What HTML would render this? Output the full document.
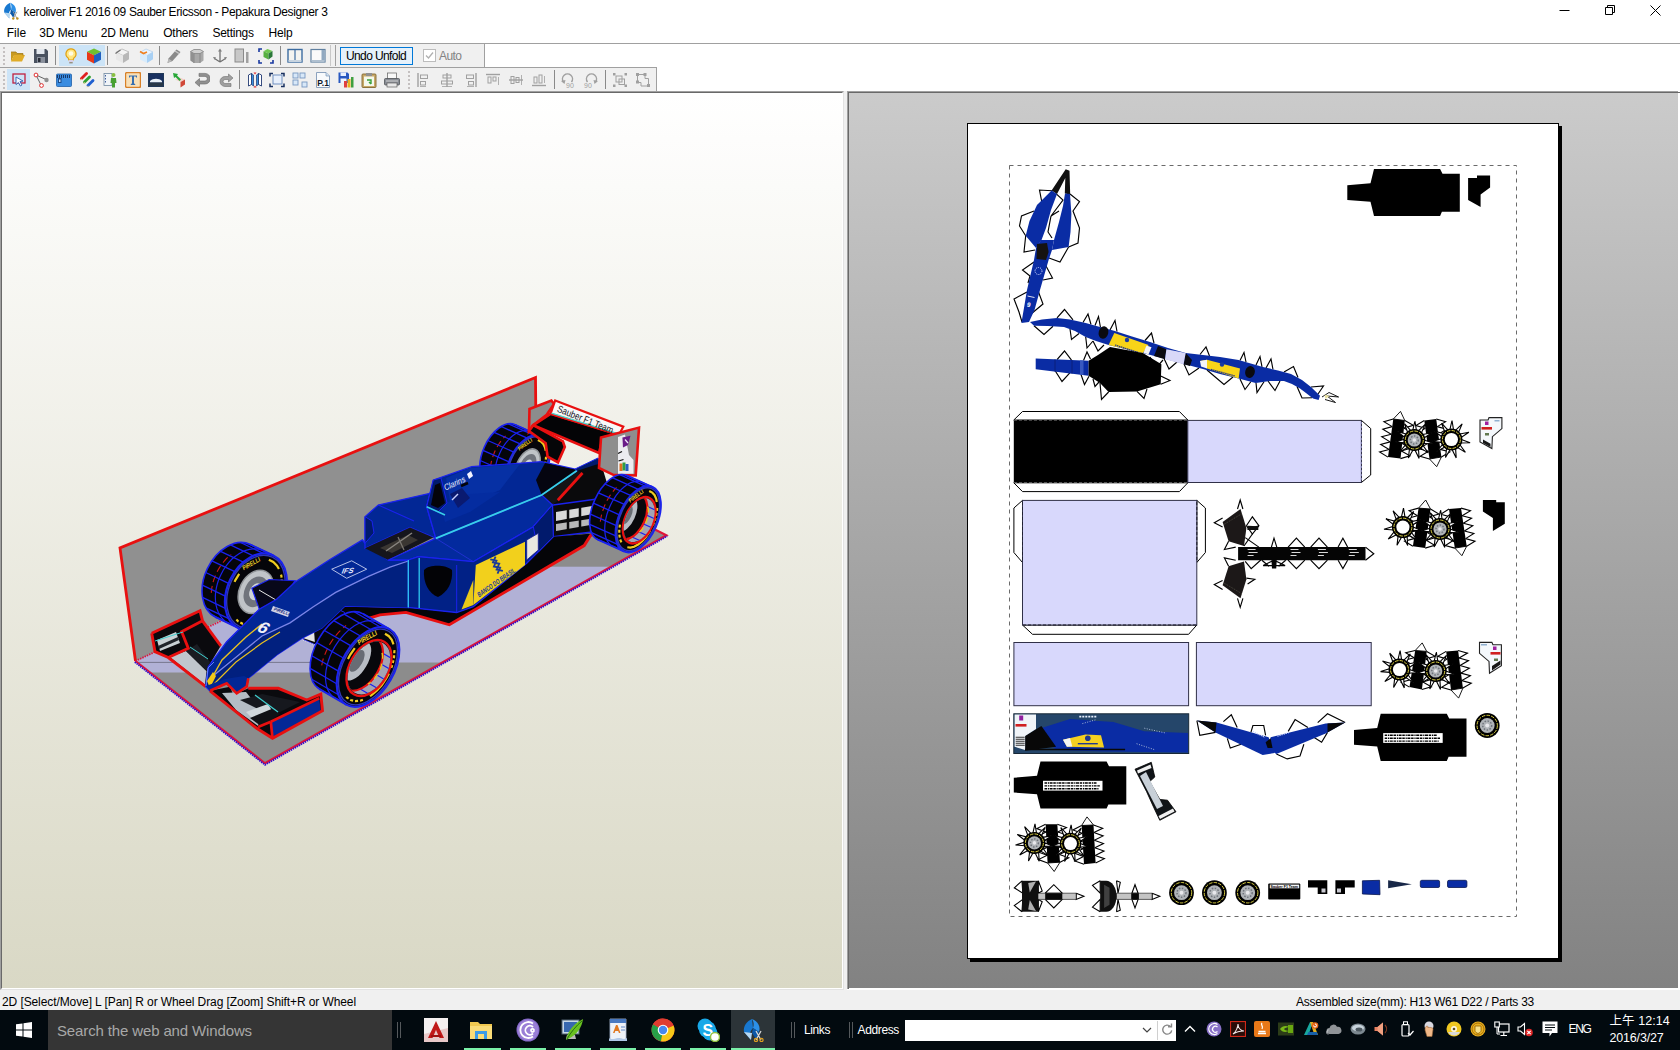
<!DOCTYPE html>
<html><head><meta charset="utf-8"><title>Pepakura Designer 3</title>
<style>
*{box-sizing:border-box;margin:0;padding:0}
html,body{width:1680px;height:1050px;overflow:hidden;background:#fff;font-family:"Liberation Sans","Noto Sans CJK TC",sans-serif;font-size:12px;color:#000}
.a{position:absolute}
.t{position:absolute;white-space:nowrap;line-height:1}
#title{left:23.5px;top:6px;font-size:12px}
.m{top:27px;font-size:12px}
#tb1{left:0;top:44px;width:485px;height:24px;background:#f0f0f0;border-right:1px solid #a0a0a0;border-bottom:1px solid #a0a0a0}
#tb2{left:0;top:68px;width:657px;height:23px;background:#f0f0f0;border-right:1px solid #a0a0a0}
.sel{background:#cce4f7;}
.sep{position:absolute;width:1px;background:#8a8a8a}
.grip{position:absolute;width:2px;background-image:linear-gradient(#c4c0c0 50%,transparent 50%);background-size:2px 4px}
#lp{left:0;top:91px;width:844px;height:899px;border:1px solid #a0a0a0;border-right-color:#e3e3e3;border-bottom-color:#e3e3e3;background:#fff}
#lpi{left:1px;top:92px;width:842px;height:897px;border:1px solid #696969;border-right-color:#fff;border-bottom-color:#fff;background:linear-gradient(#ffffff,#d9d8c5)}
#rp{left:847px;top:91px;width:831px;height:899px;background:linear-gradient(#cbcbcb,#828282);border-top:1px solid #a0a0a0;border-bottom:2px solid #fff}
#status{left:0;top:990px;width:1680px;height:20px;background:#f0f0f0}
#task{left:0;top:1010px;width:1680px;height:40px;background:#020a0f}
</style></head><body>
<div class="t" style="left:23.5px;top:6.0px;font-size:12px;color:#000;letter-spacing:-0.348px;">keroliver F1 2016 09 Sauber Ericsson - Pepakura Designer 3</div>
<svg class="a" style="left:1550px;top:0" width="130" height="22" viewBox="0 0 130 22"><g stroke="#000" stroke-width="1" fill="none"><path d="M9.5 10.500h10"/><path d="M55.500 7.500h7v7h-7z M57.500 7.500v-2h7v7h-2"/><path d="M100.500 5.500l10 10M110.500 5.500l-10 10"/></g></svg>
<div class="t" style="left:6.7px;top:26.6px;font-size:12px;color:#000;letter-spacing:0.041px;">File</div>
<div class="t" style="left:39.3px;top:26.6px;font-size:12px;color:#000;letter-spacing:-0.099px;">3D Menu</div>
<div class="t" style="left:100.7px;top:26.6px;font-size:12px;color:#000;letter-spacing:-0.099px;">2D Menu</div>
<div class="t" style="left:163.3px;top:26.6px;font-size:12px;color:#000;letter-spacing:-0.285px;">Others</div>
<div class="t" style="left:212.4px;top:26.6px;font-size:12px;color:#000;letter-spacing:-0.245px;">Settings</div>
<div class="t" style="left:268.6px;top:26.6px;font-size:12px;color:#000;letter-spacing:-0.220px;">Help</div>
<svg class="a" id="appicon" style="left:2px;top:2px" width="18" height="18" viewBox="0 0 24 24"><path d="M11 1c-5 2-9 7-8 13l7 8c-2-5-1-9 2-12z" fill="#1878d0"/><path d="M3 14l7 8 1-7z" fill="#b8d8f0"/><path d="M11 1c2 3 2 6 1 9l6 4c2-5-1-11-7-13z" fill="#2c90e8"/><path d="M12 10l6 4-3 7-4-6z" fill="#0c58a8"/><path d="M15 13l5 9M20 13l-5 9" stroke="#a0a0a0" stroke-width="1.300"/><circle cx="15" cy="22" r="1.600" fill="#c09020"/><circle cx="20.500" cy="22" r="1.600" fill="#c09020"/></svg><div class="a" style="left:0;top:43px;width:1680px;height:1px;background:#a0a0a0"></div>
<div class="a" id="tb1"></div>
<div class="a" id="tb2"></div>
<div class="a" id="tb2top" style="left:485px;top:67px;width:172px;height:1px;background:#a0a0a0"></div>
<div class="a sel" style="left:59px;top:45px;width:46px;height:21px"></div>
<div class="a sel" style="left:7px;top:69px;width:23px;height:21px"></div>
<div class="grip" style="left:3px;top:47px;height:18px"></div>
<div class="grip" style="left:3px;top:71px;height:18px"></div>
<div class="grip" style="left:408px;top:71px;height:18px"></div>
<div class="a" id="lp"></div><div class="a" id="lpi"></div>
<div class="a" style="left:844px;top:91px;width:3px;height:899px;background:#f0f0f0"></div>
<div class="a" id="rp"></div>
<div class="a" style="left:847px;top:92px;width:833px;height:1px;background:#696969"></div>
<div class="a" style="left:847px;top:91px;width:1px;height:898px;background:#a0a0a0"></div>
<div class="a" style="left:848px;top:92px;width:1px;height:897px;background:#696969"></div>
<div class="a" id="status"></div>
<div class="a" id="task"></div>
<svg class="a" style="left:9.5px;top:48px" width="16" height="16" viewBox="0 0 16 16"><path d="M1 4h5l1 1.500h6v2H4l-3 6z" fill="#c89a20"/><path d="M1 13.500l3-6.500h11l-3 6.500z" fill="#e0ac28"/><path d="M1 4h5l1 1.500h6v2" fill="none" stroke="#a07818" stroke-width=".8"/></svg>
<svg class="a" style="left:33px;top:48px" width="16" height="16" viewBox="0 0 16 16"><path d="M1 1h12l2 2v12H1z" fill="#4a5260"/><rect x="3.500" y="1" width="8" height="5" fill="#e4e8ee"/><rect x="4" y="9" width="8" height="6" fill="#8a909c"/><rect x="5" y="10" width="2.500" height="4" fill="#2a2e38"/></svg>
<svg class="a" style="left:63px;top:48px" width="16" height="16" viewBox="0 0 16 16"><path d="M8 .8a5 5 0 0 1 3 9c-.6.600-.8 1.400-.8 2.200H5.800c0-.8-.2-1.600-.8-2.200a5 5 0 0 1 3-9z" fill="#ffe680" stroke="#e0a010" stroke-width="1.200"/><circle cx="8" cy="5.500" r="2.300" fill="#fffbe0"/><rect x="5.800" y="12" width="4.400" height="2.200" fill="#d8d0e8"/><rect x="6.300" y="14.300" width="3.400" height="1" fill="#807050"/></svg>
<svg class="a" style="left:86px;top:48px" width="16" height="16" viewBox="0 0 16 16"><path d="M8 .5l7 3.200-7 3.500-7-3.500z" fill="#70c030"/><path d="M1 3.700l7 3.500v8.300l-7-3.700z" fill="#e83818"/><path d="M15 3.700l-7 3.500v8.300l7-3.700z" fill="#2060c0"/></svg>
<svg class="a" style="left:114px;top:48px" width="16" height="16" viewBox="0 0 16 16"><path d="M8 1l7 3-6 3.500-7-3.200z" fill="#f4f4f4" stroke="#a0a0a0" stroke-width=".6"/><path d="M2 4.300l7 3.200v7.500l-7-3.400z" fill="#e8e8e8"/><path d="M15 4l-6 3.500v7.500l6-3.700z" fill="#b8b8b8"/><path d="M1.500 5.500l5-3.500" stroke="#707070" stroke-width="1.200" fill="none"/></svg>
<svg class="a" style="left:138px;top:48px" width="16" height="16" viewBox="0 0 16 16"><path d="M8 1l7 3-6 3.500-7-3.200z" fill="#e8f4ff" stroke="#a8c8e8" stroke-width=".6"/><path d="M2 4.300l7 3.200v7.500l-7-3.400z" fill="#d8ecfc"/><path d="M15 4l-6 3.500v7.500l6-3.700z" fill="#a8d0f4"/><path d="M2 3.500l3.500 2 3.500-1.500" stroke="#f08020" stroke-width="1.600" fill="none"/></svg>
<svg class="a" style="left:166px;top:48px" width="16" height="16" viewBox="0 0 16 16"><path d="M10.500 1.500l4 2.500-8 9-5 2 1-4.500z" fill="#8a8a8a"/><path d="M9 3l4 2.500" stroke="#c8c8c8" stroke-width="1.400"/><path d="M2.500 10.500l-1 4.500 4.500-2z" fill="#b8b8b8"/></svg>
<svg class="a" style="left:189px;top:48px" width="16" height="16" viewBox="0 0 16 16"><path d="M1.500 3.500l3.500-2h6l3.500 2v9l-3.500 2.500h-6l-3.500-2.500z" fill="#a8a8a8"/><path d="M1.500 3.500l3.500-2h6l3.500 2-3.500 2h-6z" fill="#d0d0d0" stroke="#808080" stroke-width=".7"/><path d="M5 5.500v9.500M11 5.500v9.500" stroke="#808080" stroke-width=".8"/><path d="M1.500 3.500v9l3.500 2.500V5.500z" fill="#909090"/></svg>
<svg class="a" style="left:212px;top:48px" width="16" height="16" viewBox="0 0 16 16"><path d="M8 3v11M8 14L2.500 10.500M8 14l5.500-3.500" stroke="#707070" stroke-width="1.300" fill="none"/><path d="M8 .5l2 3H6z M1 9l3 .3-1.500 2.500z M15 9l-3 .3 1.500 2.500z" fill="#808080"/></svg>
<svg class="a" style="left:234px;top:48px" width="16" height="16" viewBox="0 0 16 16"><rect x="1" y="1" width="8.500" height="13" fill="#c8c8c8" stroke="#8a8a8a" stroke-width="1"/><rect x="12" y="4" width="2.500" height="11" fill="#a0a0a0"/></svg>
<svg class="a" style="left:258px;top:48px" width="16" height="16" viewBox="0 0 16 16"><path d="M1 4V1h3M1 12v3h3M15 12v3h-3" stroke="#1838a0" stroke-width="1.600" fill="none"/><path d="M9.500 1l5 2-4 2.500-5-2.200z" fill="#70c850"/><path d="M5.500 3.300l5 2.200v6l-5-2.600z" fill="#58b040"/><path d="M14.500 3l-4 2.500v6l4-2.900z" fill="#2a7838"/></svg>
<svg class="a" style="left:287px;top:48px" width="16" height="16" viewBox="0 0 16 16"><rect x="1" y="1.500" width="14" height="12.500" fill="#f4f4f0" stroke="#3c6ca0" stroke-width="1.400"/><path d="M8 1.500v12.500" stroke="#3c6ca0" stroke-width="1.200"/><rect x="1.500" y="12" width="13" height="2" fill="#c8d4e0"/></svg>
<svg class="a" style="left:310px;top:48px" width="16" height="16" viewBox="0 0 16 16"><rect x="1" y="1.500" width="14" height="12.500" fill="#fafafa" stroke="#6080a0" stroke-width="1.200"/><rect x="11.500" y="2" width="3" height="11.500" fill="#90a8c0"/><rect x="1.500" y="12" width="13" height="2" fill="#b0c0d0"/></svg>
<svg class="a" style="left:10.5px;top:71.5px" width="16" height="16" viewBox="0 0 16 16"><rect x="2" y="2" width="12" height="9" fill="none" stroke="#c02040" stroke-width="1.300"/><path d="M5 5l7 4-3 .6 2 3.400-1.600 1-2-3.400-2.400 2z" fill="#f4f8ff" stroke="#3060b0" stroke-width=".9"/></svg>
<svg class="a" style="left:33px;top:71.5px" width="16" height="16" viewBox="0 0 16 16"><path d="M3 3l5.500 11M3 3l10 4.500" stroke="#404040" stroke-width=".8"/><circle cx="3" cy="3" r="1.900" fill="#fff" stroke="#e03030" stroke-width="1"/><circle cx="8.500" cy="13.500" r="1.900" fill="#fff" stroke="#e03030" stroke-width="1"/><circle cx="13.500" cy="8" r="2.200" fill="#909090"/></svg>
<svg class="a" style="left:56px;top:71.5px" width="16" height="16" viewBox="0 0 16 16"><rect x=".5" y="2" width="15" height="12.500" rx="1" fill="#3a8ce0" stroke="#2060a8" stroke-width=".8"/><path d="M1 4.500h14" stroke="#183868" stroke-width="3" stroke-dasharray="1 1"/><rect x="2" y="6" width="3.500" height="5" fill="#1c4c8c"/><rect x="3" y="7.500" width="1.500" height="2.500" fill="#b8d8f8"/></svg>
<svg class="a" style="left:79px;top:71.5px" width="16" height="16" viewBox="0 0 16 16"><g stroke-width="2.800" stroke-linecap="round"><path d="M2.500 6.500l5-5" stroke="#e02020"/><path d="M5.500 10l5-5" stroke="#30a030"/><path d="M9 13.500l5-5" stroke="#2060d0"/></g><path d="M1 8.500l1.500-2 1 1z M4 12l1.500-2 1 1z M7.500 15.500l1.500-2 1 1z" fill="#e8c890"/></svg>
<svg class="a" style="left:103px;top:71.5px" width="16" height="16" viewBox="0 0 16 16"><rect x="1" y="1.500" width="8" height="12" fill="#f0f4f8" stroke="#7088a0" stroke-width=".8"/><path d="M2.500 3v9" stroke="#4060a0" stroke-width="1" stroke-dasharray="1.500 1.500"/><circle cx="10.500" cy="3" r="2" fill="#88c040"/><path d="M8 6h5l.5 5h-1.500v4.500h-3V11H7.500z" fill="#48a030"/></svg>
<svg class="a" style="left:125px;top:71.5px" width="16" height="16" viewBox="0 0 16 16"><rect x=".5" y=".5" width="15" height="15" rx="1.500" fill="#f8e0b8" stroke="#d88028" stroke-width="1.400"/><path d="M4 3.500h8v2h-.8l-.5-.9H9v7l1.200.5v.9H5.800v-.9L7 11.600v-7H5.300l-.5.900H4z" fill="#3870b0"/></svg>
<svg class="a" style="left:148px;top:71.5px" width="16" height="16" viewBox="0 0 16 16"><rect x=".5" y="1.500" width="15" height="13" fill="#183060" stroke="#203858" stroke-width="1"/><path d="M2 9c3-3 9-3 12 0l0 1.500H2z" fill="#e8f0f8"/><rect x="1" y="10.500" width="14" height="3.500" fill="#283848"/></svg>
<svg class="a" style="left:171px;top:71.5px" width="16" height="16" viewBox="0 0 16 16"><path d="M8.500 5.500l5.500 2-4.500 2.500-5.500-2.200z" fill="#f4d0c8"/><path d="M4 7.800l5.500 2.200v5.500l-5.500-2.600z" fill="#f0f0f0"/><path d="M14 7.500l-4.500 2.500v5.500l4.500-2.900z" fill="#d04838"/><path d="M2 1l5 1-1 1.500 4 4-1.500 1.500-4-4L3 6z" fill="#28a838"/></svg>
<svg class="a" style="left:194px;top:71.5px" width="16" height="16" viewBox="0 0 16 16"><path d="M1 10.500l4.500-4v2.500h5.500a2.300 2.300 0 0 0 0-4.600H5v-3h6a5.300 5.300 0 0 1 0 10.600H5.500v2.500z" fill="#909090" stroke="#686868" stroke-width=".6"/></svg>
<svg class="a" style="left:218px;top:71.5px" width="16" height="16" viewBox="0 0 16 16"><path d="M15 6l-4.500-4v2.500H7a5 5 0 0 0 0 10h6v-3H7a2 2 0 0 1 0-4h3.500v2.500z" fill="#a0a0a0" stroke="#707070" stroke-width=".6"/></svg>
<svg class="a" style="left:247px;top:71.5px" width="16" height="16" viewBox="0 0 16 16"><path d="M1.500 3l3-1.500v11l-3 1.500z M11.500 1.500l3 1.500v11l-3-1.500z" fill="#fff" stroke="#203870" stroke-width=".9"/><path d="M4.500 1.500l2 1.500v11l-2-1.500z M11.500 1.500l-2 1.500v11l2-1.500z" fill="#3a90e0" stroke="#203870" stroke-width=".7"/><path d="M6.500 .5h3l-1.500 2z M6.500 15.500h3l-1.500-2z" fill="#e03030"/></svg>
<svg class="a" style="left:269px;top:71.5px" width="16" height="16" viewBox="0 0 16 16"><path d="M1 4.500V1.500h3M1 11.500v3h3M15 11.500v3h-3M15 4.500V1.500h-3" stroke="#183060" stroke-width="1.500" fill="none"/><rect x="4" y="3" width="9" height="9" fill="#e8f0fc" stroke="#7090c0" stroke-width="1"/></svg>
<svg class="a" style="left:292px;top:71.5px" width="16" height="16" viewBox="0 0 16 16"><g fill="#d8e8f8" stroke="#7898c0" stroke-width=".9"><rect x="1" y="1" width="5" height="5"/><rect x="8" y="1" width="5" height="5"/><rect x="1" y="8" width="5" height="5"/><rect x="10" y="10" width="5" height="5"/></g></svg>
<svg class="a" style="left:315px;top:71.5px" width="16" height="16" viewBox="0 0 16 16"><path d="M1.500 .5h9.500l3.500 3.500v11.500H1.500z" fill="#f8fafc" stroke="#8098b8" stroke-width=".9"/><path d="M11 .5v3.500h3.500" fill="#d0e0f0" stroke="#8098b8" stroke-width=".7"/><text x="2.300" y="14" font-family="Liberation Sans,sans-serif" font-weight="bold" font-size="8.500" fill="#101828">P.1</text></svg>
<svg class="a" style="left:338px;top:71.5px" width="16" height="16" viewBox="0 0 16 16"><path d="M.5 .5h9l1.500 1.500v9H.5z" fill="#2858c0"/><rect x="2.500" y=".5" width="5.500" height="3.500" fill="#e8f0ff"/><rect x="2.500" y="6.500" width="6" height="4.500" fill="#f0f4ff"/><rect x="6" y="9" width="3" height="6.500" fill="#e04040"/><rect x="9.500" y="7" width="3" height="8.500" fill="#e8b020"/><rect x="13" y="5" width="2.500" height="10.500" fill="#40a040"/></svg>
<svg class="a" style="left:361px;top:71.5px" width="16" height="16" viewBox="0 0 16 16"><rect x="1" y="2" width="14" height="13.500" rx="1" fill="#c8a868" stroke="#806830" stroke-width=".9"/><rect x="3" y="4.500" width="10" height="9.500" fill="#f4f8ec"/><rect x="5" y="1" width="6" height="3" fill="#909090"/><path d="M6 8h4v4M10 12l-2-2" stroke="#38a038" stroke-width="1.400" fill="none"/></svg>
<svg class="a" style="left:384px;top:71.5px" width="16" height="16" viewBox="0 0 16 16"><rect x="3.500" y="1" width="9" height="6" fill="#f8f8f8" stroke="#707070" stroke-width=".8"/><rect x=".5" y="6.500" width="15" height="6.500" rx="1" fill="#888c94" stroke="#505458" stroke-width=".8"/><rect x="3" y="11" width="10" height="4" fill="#e8e8e8" stroke="#606060" stroke-width=".7"/><path d="M2 9h12" stroke="#d0d0d0" stroke-width="1"/></svg>
<svg class="a" style="left:416px;top:71.5px" width="16" height="16" viewBox="0 0 16 16"><path d="M2 1v14" stroke="#a0a0a0" stroke-width="1.400"/><rect x="4.500" y="3" width="7" height="3.500" fill="none" stroke="#a0a0a0"/><rect x="4.500" y="9.500" width="5" height="3.500" fill="none" stroke="#a0a0a0"/><path d="M4 14.500h6" stroke="#a0a0a0" stroke-width=".8"/></svg>
<svg class="a" style="left:439px;top:71.5px" width="16" height="16" viewBox="0 0 16 16"><path d="M8 1v14" stroke="#a0a0a0" stroke-width="1.400"/><rect x="4" y="3" width="8" height="3" fill="none" stroke="#a0a0a0"/><rect x="2.500" y="9" width="11" height="3" fill="none" stroke="#a0a0a0"/><path d="M3 14.500h10" stroke="#a0a0a0" stroke-width=".8"/></svg>
<svg class="a" style="left:462px;top:71.5px" width="16" height="16" viewBox="0 0 16 16"><path d="M14 1v14" stroke="#a0a0a0" stroke-width="1.400"/><rect x="4.500" y="3" width="7" height="3.500" fill="none" stroke="#a0a0a0"/><rect x="6.500" y="9.500" width="5" height="3.500" fill="none" stroke="#a0a0a0"/><path d="M5 14.500h7" stroke="#a0a0a0" stroke-width=".8"/></svg>
<svg class="a" style="left:485px;top:71.5px" width="16" height="16" viewBox="0 0 16 16"><path d="M1 2.500h14" stroke="#a0a0a0" stroke-width="1.400"/><rect x="3" y="5" width="3" height="6" fill="none" stroke="#a0a0a0"/><rect x="8" y="5" width="3" height="4" fill="none" stroke="#a0a0a0"/><path d="M13.500 5v8" stroke="#a0a0a0" stroke-width=".8"/></svg>
<svg class="a" style="left:508px;top:71.5px" width="16" height="16" viewBox="0 0 16 16"><path d="M1 8h14" stroke="#a0a0a0" stroke-width="1.400"/><rect x="3" y="4.500" width="3" height="7" fill="none" stroke="#a0a0a0"/><rect x="8" y="5.500" width="3" height="5" fill="none" stroke="#a0a0a0"/><path d="M13.500 3v10" stroke="#a0a0a0" stroke-width=".8"/></svg>
<svg class="a" style="left:531px;top:71.5px" width="16" height="16" viewBox="0 0 16 16"><path d="M1 13.500h14" stroke="#a0a0a0" stroke-width="1.400"/><rect x="3" y="5" width="3" height="6" fill="none" stroke="#a0a0a0"/><rect x="8" y="3" width="3" height="8" fill="none" stroke="#a0a0a0"/><path d="M13.500 4v7" stroke="#a0a0a0" stroke-width=".8"/></svg>
<svg class="a" style="left:560px;top:71.5px" width="16" height="16" viewBox="0 0 16 16"><path d="M3.500 10a5 5 0 1 1 8 0" fill="none" stroke="#a0a0a0" stroke-width="1.500"/><path d="M1 9l3.500 3 1-4z" fill="#a0a0a0"/><text x="6" y="15.500" font-family="Liberation Sans,sans-serif" font-size="7" fill="#a0a0a0">90</text></svg>
<svg class="a" style="left:583px;top:71.5px" width="16" height="16" viewBox="0 0 16 16"><path d="M4.500 10a5 5 0 1 1 8 0" fill="none" stroke="#a0a0a0" stroke-width="1.500"/><path d="M15 9l-3.500 3-1-4z" fill="#a0a0a0"/><text x="1" y="15.500" font-family="Liberation Sans,sans-serif" font-size="7" fill="#a0a0a0">90</text></svg>
<svg class="a" style="left:612px;top:71.5px" width="16" height="16" viewBox="0 0 16 16"><g fill="#a0a0a0"><rect x="1" y="1" width="2.500" height="2.500"/><rect x="12.500" y="1" width="2.500" height="2.500"/><rect x="1" y="12.500" width="2.500" height="2.500"/><rect x="12.500" y="12.500" width="2.500" height="2.500"/></g><rect x="4" y="4" width="6" height="6" fill="none" stroke="#a0a0a0"/><rect x="7" y="7" width="5.500" height="5.500" fill="none" stroke="#a0a0a0"/></svg>
<svg class="a" style="left:635px;top:71.5px" width="16" height="16" viewBox="0 0 16 16"><g fill="#a0a0a0"><rect x="1" y="1" width="3" height="3"/><rect x="8.500" y="1" width="3" height="3"/><rect x="1" y="8.500" width="3" height="3"/><rect x="12" y="12" width="3" height="3"/></g><path d="M2.500 2.500h7.500v4h3.500v7.500h-7.500v-3.500h-3.500z" fill="none" stroke="#a0a0a0"/></svg>
<div class="sep" style="left:55px;top:46px;height:19px"></div><div class="sep" style="left:107px;top:46px;height:19px"></div><div class="sep" style="left:159px;top:46px;height:19px"></div><div class="sep" style="left:280px;top:46px;height:19px"></div><div class="sep" style="left:330px;top:45px;height:21px;background:#c8c8c8"></div><div class="sep" style="left:335px;top:45px;height:21px;background:#a0a0a0"></div><div class="sep" style="left:239px;top:70px;height:19px"></div><div class="sep" style="left:554px;top:70px;height:19px"></div><div class="sep" style="left:605px;top:70px;height:19px"></div><div class="a" style="left:340px;top:47px;width:73px;height:18px;background:#e5f1fb;border:1px solid #0078d7"></div><div class="t" style="left:346.0px;top:50.2px;font-size:12px;color:#000;letter-spacing:-0.610px;">Undo Unfold</div>
<div class="a" style="left:423px;top:49px;width:13px;height:13px;background:#fff;border:1px solid #bcbcbc"></div><svg class="a" style="left:423px;top:49px" width="13" height="13"><path d="M3 6.500l2.500 2.500 4.500-5.500" fill="none" stroke="#b0b0b0" stroke-width="1.300"/></svg><div class="t" style="left:439.0px;top:50.2px;font-size:12px;color:#838383;letter-spacing:-0.546px;">Auto</div>
<div class="t" style="left:2.0px;top:996.0px;font-size:12px;color:#000;letter-spacing:-0.094px;">2D [Select/Move] L [Pan] R or Wheel Drag [Zoom] Shift+R or Wheel</div>
<div class="t" style="left:1296.0px;top:996.0px;font-size:12px;color:#000;letter-spacing:-0.256px;">Assembled size(mm): H13 W61 D22 / Parts 33</div>
<svg class="a" style="left:0;top:0" width="850" height="1000" viewBox="0 0 850 1000"><defs><clipPath id="flr"><polygon points="135.500,661 265,763.300 666.400,535.300 536.500,469"/></clipPath></defs><polygon points="135.5,661.0 265.0,763.3 666.4,535.3 536.5,469.0" fill="#8c8c8c"/><g clip-path="url(#flr)"><rect x="100" y="566.700" width="600" height="95.800" fill="#b1b1d6"/><rect x="100" y="662" width="240" height="10.500" fill="#b1b1d6"/><path d="M100 662.400h215" stroke="#68687c" stroke-width=".8"/></g><polyline points="135.5,661.0 265.0,763.3 666.4,535.3 640.0,522.0" fill="none" stroke="#e01438" stroke-width="2.2"/><polyline points="134.8,662.0 265.0,764.8 667.2,536.1" fill="none" stroke="#3010d0" stroke-width="1.8" stroke-dasharray="1.500 .8"/><polygon points="120.0,548.0 535.5,377.5 536.5,469.0 135.5,661.0" fill="#909090"/><polyline points="135.5,661.0 120.0,548.0 535.5,377.5 536.3,469.0" fill="none" stroke="#e81010" stroke-width="2.8"/><polyline points="135.5,661.0 222.0,620.5" fill="none" stroke="#d81840" stroke-width="1.8" stroke-dasharray="1.500 1"/><ellipse cx="501.7" cy="454.8" rx="19.0" ry="33.0" transform="rotate(24.0 501.7 454.8)" fill="#05050a" stroke="#1a22ee" stroke-width="1.6"/><polygon points="541.1,436.3 515.1,424.7 488.3,484.9 514.3,496.5" fill="#05050a"/><path d="M500.5 489.9L498.9 488.2L497.5 486.1L496.4 483.7L495.6 481.0L495.1 478.0L494.8 474.7L494.9 471.3L495.3 467.8L496.0 464.2L496.9 460.5L498.2 456.9L499.7 453.3L501.4 449.8L503.3 446.5L505.5 443.4L507.8 440.6L510.2 438.0L512.7 435.8L515.2 433.9L517.8 432.4L520.4 431.3L522.9 430.6L525.3 430.4L527.7 430.6" fill="none" stroke="#1a22ee" stroke-width="1.2"/><path d="M490.4 467.8L490.5 466.4L490.7 465.0L491.0 463.5L491.3 462.0L491.7 460.6L492.0 459.1L492.5 457.6L493.0 456.2L493.5 454.7L494.1 453.3L494.7 451.8L495.3 450.4L496.0 449.0L496.8 447.6L497.5 446.3L498.3 445.0L499.1 443.7L500.0 442.4L500.9 441.2L501.8 440.0L502.7 438.9L503.6 437.8L504.6 436.8L505.6 435.8" fill="none" stroke="#d01818" stroke-width="1.1" stroke-dasharray="7 4"/><path d="M512.0 495.2L486.0 483.6" stroke="#1a22ee" stroke-width="1.3"/><path d="M507.9 489.8L481.9 478.2" stroke="#1a22ee" stroke-width="1.3"/><path d="M505.9 481.8L479.9 470.2" stroke="#1a22ee" stroke-width="1.3"/><path d="M506.3 472.1L480.3 460.5" stroke="#1a22ee" stroke-width="1.3"/><path d="M509.0 461.9L483.0 450.3" stroke="#1a22ee" stroke-width="1.3"/><path d="M513.8 452.1L487.8 440.5" stroke="#1a22ee" stroke-width="1.3"/><path d="M520.1 443.9L494.1 432.3" stroke="#1a22ee" stroke-width="1.3"/><path d="M527.2 438.1L501.2 426.5" stroke="#1a22ee" stroke-width="1.3"/><path d="M534.4 435.4L508.4 423.8" stroke="#1a22ee" stroke-width="1.3"/><path d="M540.8 436.1L514.8 424.5" stroke="#1a22ee" stroke-width="1.3"/><path d="M541.1 436.3L515.1 424.7M514.3 496.5L488.3 484.9" stroke="#1a22ee" stroke-width="1.8"/><ellipse cx="527.7" cy="466.4" rx="19.0" ry="33.0" transform="rotate(24.0 527.7 466.4)" fill="#05050a" stroke="#1a22ee" stroke-width="2.2"/><ellipse cx="527.7" cy="466.4" rx="17.9" ry="31.3" transform="rotate(24.0 527.7 466.4)" fill="none" stroke="#3038b8" stroke-width="1.4"/><path d="M537.9 440.0L540.9 441.5L543.3 444.0L545.0 447.6L546.0 451.9L546.1 457.0L545.4 462.4L544.0 468.0L541.8 473.6L539.0 478.8L535.6 483.5L532.0 487.4L528.1 490.4L524.2 492.3L520.5 493.1L517.1 492.7L514.2 491.1L511.9 488.5L510.2 484.8L509.4 480.4L509.3 475.3L510.1 469.8L511.6 464.2L513.9 458.7L516.8 453.5" fill="none" stroke="#f0cc20" stroke-width="2.2" stroke-dasharray="14 6 3 2 3 2 3 2 3 6 30 8 3 2 3 2 3 2 3 40"/><text x="0" y="0" text-anchor="middle" font-family="Liberation Sans,sans-serif" font-weight="bold" font-style="italic" font-size="5.3" fill="#f4d428" transform="translate(526.1 445.9) rotate(-35.9) scale(.8 1)">PIRELLI</text><ellipse cx="527.7" cy="466.4" rx="11.0" ry="18.5" transform="rotate(24.0 527.7 466.4)" fill="#c0c4c8" stroke="#909498" stroke-width="1.5"/><ellipse cx="527.7" cy="466.4" rx="7.6" ry="13.2" transform="rotate(24.0 527.7 466.4)" fill="#70747c"/><ellipse cx="527.7" cy="466.4" rx="4.2" ry="7.3" transform="rotate(24.0 527.7 466.4)" fill="#d0d4d8"/><polygon points="529.5,409.0 551.4,400.5 554.0,404.0 546.7,414.8 533.3,425.2 529.0,431.0" fill="#8c8c8c" stroke="#e81010" stroke-width="2.6"/><polygon points="529.0,431.0 533.3,425.2 562.9,441.4 564.8,447.0 558.0,462.4 547.6,456.7 545.7,443.3" fill="#060608" stroke="#e81010" stroke-width="2.6"/><polygon points="533.3,425.2 550.5,413.8 619.0,434.8 602.9,437.5 599.0,452.9" fill="#040406" stroke="#e81010" stroke-width="2.6"/><polygon points="555.2,400.5 623.3,426.7 619.0,434.8 550.5,413.8" fill="#f8f8f8" stroke="#e81010" stroke-width="2.2"/><polyline points="551.5,413.2 618.5,433.8" fill="none" stroke="#50d8d0" stroke-width="1.4"/><text x="0" y="0" font-family="Liberation Sans,sans-serif" font-size="10" fill="#101018" transform="translate(556.500 411.500) rotate(22) scale(.81 1)">Sauber F1 Team</text><polygon points="575.0,469.0 598.0,458.0 601.0,463.0 578.0,475.0" fill="#011a6c" stroke="#1a22ee" stroke-width="1"/><polygon points="552.5,505.0 576.7,471.0 601.0,463.0 612.0,500.0 600.0,532.0 553.3,536.7" fill="#0a0a0c"/><polygon points="556.0,512.0 598.0,505.0 598.0,513.0 556.0,521.0" fill="#d8d8d8"/><polygon points="556.0,524.0 596.0,518.0 596.0,524.0 556.0,531.0" fill="#b8b8b8"/><path d="M568 508v22M580 506v22" stroke="#0a0a0c" stroke-width="2.500"/><polyline points="553.0,505.0 612.0,497.0" fill="none" stroke="#1a22ee" stroke-width="1.5"/><polyline points="553.3,536.7 600.0,531.0" fill="none" stroke="#1a22ee" stroke-width="1.5"/><polygon points="541.7,495.0 576.7,470.8 583.0,472.5 558.0,500.5 552.5,505.0" fill="#141416"/><polyline points="582.5,473.0 557.8,500.2" fill="none" stroke="#e81010" stroke-width="2.8"/><polygon points="601.0,437.6 639.0,427.6 635.7,475.5 613.3,474.8 599.0,468.0" fill="#8e8e8e" stroke="#e81010" stroke-width="2.6"/><polygon points="618.0,437.0 625.0,434.5 629.0,455.0 633.5,460.0 633.5,473.8 618.0,473.8" fill="#ececf0"/><polygon points="622.4,437.5 630.5,435.7 628.0,445.0 623.0,447.5" fill="#6a1c88"/><path d="M625 439.500l3 3.500" stroke="#f0e8f8" stroke-width="1.200"/><rect x="619.500" y="463.500" width="3" height="7.500" fill="#e07020"/><rect x="622.500" y="462.500" width="3" height="8" fill="#30a040"/><rect x="625.500" y="464" width="3" height="7" fill="#2860c0"/><path d="M618 453.500l4 -2M618.500 461l5 -1.500" stroke="#111" stroke-width="1.300"/><ellipse cx="233.0" cy="580.9" rx="28.4" ry="40.3" transform="rotate(25.5 233.0 580.9)" fill="#05050a" stroke="#1a22ee" stroke-width="1.6"/><polygon points="273.2,555.4 250.3,544.5 215.7,617.3 238.6,628.2" fill="#05050a"/><path d="M224.7 620.9L222.3 618.5L220.2 615.7L218.4 612.5L217.0 608.9L216.0 605.0L215.5 600.9L215.3 596.6L215.6 592.2L216.4 587.7L217.5 583.2L219.0 578.7L221.0 574.4L223.2 570.2L225.8 566.3L228.7 562.6L231.8 559.3L235.1 556.4L238.6 554.0L242.2 551.9L245.8 550.4L249.4 549.4L253.0 548.9L256.5 548.9L259.9 549.5" fill="none" stroke="#1a22ee" stroke-width="1.2"/><path d="M211.3 592.9L211.4 591.1L211.6 589.3L211.9 587.5L212.3 585.7L212.7 583.8L213.1 582.0L213.7 580.2L214.3 578.4L214.9 576.7L215.7 574.9L216.5 573.2L217.3 571.5L218.2 569.8L219.2 568.1L220.2 566.5L221.2 565.0L222.3 563.5L223.5 562.0L224.7 560.6L225.9 559.2L227.1 557.9L228.4 556.7L229.8 555.5L231.1 554.4" fill="none" stroke="#d01818" stroke-width="1.1" stroke-dasharray="7 4"/><path d="M235.2 626.1L212.3 615.2" stroke="#1a22ee" stroke-width="1.3"/><path d="M228.8 618.7L205.9 607.8" stroke="#1a22ee" stroke-width="1.3"/><path d="M225.4 608.3L202.5 597.4" stroke="#1a22ee" stroke-width="1.3"/><path d="M225.3 596.1L202.4 585.2" stroke="#1a22ee" stroke-width="1.3"/><path d="M228.6 583.4L205.7 572.5" stroke="#1a22ee" stroke-width="1.3"/><path d="M234.8 571.7L211.9 560.8" stroke="#1a22ee" stroke-width="1.3"/><path d="M243.4 562.2L220.5 551.3" stroke="#1a22ee" stroke-width="1.3"/><path d="M253.3 555.8L230.4 544.9" stroke="#1a22ee" stroke-width="1.3"/><path d="M263.4 553.4L240.5 542.5" stroke="#1a22ee" stroke-width="1.3"/><path d="M272.8 555.2L249.9 544.3" stroke="#1a22ee" stroke-width="1.3"/><path d="M273.2 555.4L250.3 544.5M238.6 628.2L215.7 617.3" stroke="#1a22ee" stroke-width="1.8"/><ellipse cx="255.9" cy="591.8" rx="28.4" ry="40.3" transform="rotate(25.5 255.9 591.8)" fill="#05050a" stroke="#1a22ee" stroke-width="2.2"/><ellipse cx="255.9" cy="591.8" rx="26.7" ry="38.3" transform="rotate(25.5 255.9 591.8)" fill="none" stroke="#3038b8" stroke-width="1.4"/><path d="M268.9 559.8L273.3 562.0L277.0 565.6L279.7 570.3L281.4 576.0L281.9 582.4L281.3 589.2L279.5 596.1L276.7 602.9L273.0 609.1L268.5 614.6L263.5 619.0L258.1 622.3L252.7 624.2L247.4 624.7L242.4 623.7L238.1 621.3L234.5 617.6L231.9 612.7L230.3 607.0L229.9 600.5L230.7 593.7L232.5 586.8L235.4 580.1L239.2 573.9" fill="none" stroke="#f0cc20" stroke-width="2.2" stroke-dasharray="14 6 3 2 3 2 3 2 3 6 30 8 3 2 3 2 3 2 3 40"/><text x="0" y="0" text-anchor="middle" font-family="Liberation Sans,sans-serif" font-weight="bold" font-style="italic" font-size="6.4" fill="#f4d428" transform="translate(252.2 565.6) rotate(-29.1) scale(.8 1)">PIRELLI</text><ellipse cx="255.9" cy="591.8" rx="16.5" ry="22.6" transform="rotate(25.5 255.9 591.8)" fill="#c0c4c8" stroke="#909498" stroke-width="1.5"/><ellipse cx="255.9" cy="591.8" rx="11.4" ry="16.1" transform="rotate(25.5 255.9 591.8)" fill="#70747c"/><ellipse cx="255.9" cy="591.8" rx="6.2" ry="8.9" transform="rotate(25.5 255.9 591.8)" fill="#d0d4d8"/><polygon points="251.9,588.2 269.2,579.5 295.2,580.7 285.0,596.0 259.3,609.2" fill="#08081a" stroke="#1a22ee" stroke-width="1.2"/><polyline points="259.0,590.0 276.0,600.0" fill="none" stroke="#e8e8e8" stroke-width="1"/><polygon points="151.7,633.3 200.0,610.8 202.5,620.8 220.8,645.8 208.3,666.7 205.8,686.7 168.3,657.5 155.0,651.7" fill="#0a0a0e"/><polygon points="169.8,657.1 186.0,651.0 206.5,671.0 205.0,684.8" fill="#c0c6cc"/><polygon points="186.0,651.0 197.0,644.0 210.0,662.0 206.5,671.0" fill="#1a1c22"/><polygon points="157.0,640.0 176.0,632.0 180.0,643.0 160.0,651.0" fill="#c8d0d4"/><polygon points="158.0,646.0 178.0,637.0 179.0,640.0 159.0,649.0" fill="#20242a"/><polyline points="151.7,633.3 200.0,610.8 202.5,620.8 181.7,631.7 188.3,648.3 168.3,657.5 155.0,651.7 151.7,633.3" fill="none" stroke="#e81010" stroke-width="2.9"/><polyline points="202.5,620.8 220.8,645.8" fill="none" stroke="#e81010" stroke-width="2.9"/><polyline points="168.3,657.5 205.8,686.7" fill="none" stroke="#e81010" stroke-width="2.9"/><polyline points="155.0,641.0 183.0,632.0" fill="none" stroke="#40d0d0" stroke-width="1"/><polyline points="190.0,647.0 208.0,659.0" fill="none" stroke="#40d0d0" stroke-width="1"/><polygon points="343.3,606.7 408.3,607.5 456.7,612.5 473.3,606.7 526.7,563.3 553.3,536.7 595.3,533.2 590.4,535.7 584.2,545.6 449.3,624.8 406.0,612.4 380.0,614.9 330.0,630.0" fill="#050508"/><polyline points="330.0,630.0 380.0,614.9 406.0,612.4 449.3,624.8 584.2,545.6 590.4,535.7 597.0,533.0" fill="none" stroke="#e81010" stroke-width="2.9"/><polygon points="302.4,625.9 330.8,606.1 344.5,612.3 344.5,618.5 314.8,644.5 303.6,639.5" fill="#08080c" stroke="#1a22ee" stroke-width="1"/><polygon points="303.0,627.0 313.5,622.0 314.8,642.0 303.6,638.3" fill="#e4e4e4"/><polygon points="313.5,619.0 321.0,614.0 322.0,620.0 314.5,626.0" fill="#d0d0d0"/><polygon points="324.0,612.5 331.0,608.0 332.0,612.0 325.0,617.0" fill="#c0c0c0"/><polyline points="303.0,640.0 315.0,645.0" fill="none" stroke="#e8e8e8" stroke-width="1" stroke-dasharray="1 1"/><polygon points="205.8,686.7 208.3,666.7 226.7,641.7 259.3,609.2 276.6,599.3 295.2,582.0 330.0,559.5 362.4,540.0 365.0,543.3 388.3,560.0 408.3,560.0 408.3,607.5 345.0,606.0 322.0,628.0 301.7,638.3 276.7,655.0 248.3,678.3 246.7,686.7 236.7,693.3 226.7,683.3 210.0,690.8" fill="#022795" stroke="#1a22ee" stroke-width="1.4"/><polygon points="207.0,684.0 225.0,664.0 262.0,636.0 290.0,622.9 313.0,607.0 335.7,592.4 369.0,576.2 390.0,567.1 408.3,561.0 408.3,607.5 345.0,606.0 322.0,628.0 301.7,638.3 276.7,655.0 248.3,678.3 246.7,686.7 236.7,693.3 226.7,683.3 210.0,690.8" fill="#01207f"/><polyline points="213.0,676.0 262.0,636.0 290.0,622.9 313.0,607.0 335.7,592.4 369.0,576.2 390.0,567.1 408.3,561.0" fill="none" stroke="#7c86e8" stroke-width="1.3"/><polyline points="209.0,683.0 222.0,660.0 246.0,637.0 262.0,624.0" fill="none" stroke="#e8c020" stroke-width="1.4"/><polyline points="212.0,686.0 236.0,662.0 262.0,643.0 280.0,632.0" fill="none" stroke="#e8c020" stroke-width="1.2"/><polygon points="207.0,681.0 213.0,672.0 216.0,676.0 210.0,688.0" fill="#f0c818"/><polyline points="206.0,686.0 208.0,668.0 214.0,662.0" fill="none" stroke="#6080ff" stroke-width="1"/><text x="0" y="0" font-family="Liberation Sans,sans-serif" font-weight="bold" font-size="17" fill="#f0f0f8" transform="translate(272 625) rotate(205) skewX(-15)">9</text><polygon points="273.0,606.0 290.0,612.0 288.0,617.0 271.0,611.0" fill="#d0d4e8"/><text x="0" y="0" font-family="Liberation Sans,sans-serif" font-weight="bold" font-style="italic" font-size="4.600" fill="#1a2a80" transform="translate(273.500 610.200) rotate(19.500) scale(.92 1)">PIRELLI</text><polygon points="331.7,569.2 351.7,560.8 366.7,569.2 346.7,578.3" fill="none" stroke="#c8d0f0" stroke-width="0.9"/><text x="0" y="0" font-family="Liberation Sans,sans-serif" font-weight="bold" font-size="7.500" fill="#e8ecff" transform="translate(341 573.500) rotate(-3) skewX(-25)">IFS</text><polygon points="365.0,543.3 365.0,516.7 378.3,505.0 430.0,493.3 426.7,506.7 435.8,538.3 410.0,527.5 365.0,548.3" fill="#022795" stroke="#1a22ee" stroke-width="1.3"/><polygon points="365.0,516.7 365.0,543.3 374.0,533.0 372.0,521.0" fill="#011a6c" stroke="#1a22ee" stroke-width="1"/><polyline points="378.3,505.0 414.0,521.0" fill="none" stroke="#1a22ee" stroke-width="1.1"/><polygon points="365.0,548.3 410.0,527.5 433.3,537.5 388.3,560.0" fill="#15151c"/><polygon points="380.0,548.0 408.0,535.0 418.0,540.0 392.0,553.0" fill="#3a3632"/><polyline points="386.0,551.0 412.0,533.0" fill="none" stroke="#8a8680" stroke-width="1.5"/><polyline points="398.0,537.0 404.0,550.0" fill="none" stroke="#7a7670" stroke-width="1.3"/><polygon points="435.8,538.3 541.7,495.0 552.5,505.0 533.3,526.7 473.3,561.7 418.3,556.7 408.3,560.0 388.3,560.0" fill="#032a9e" stroke="#1a22ee" stroke-width="1.3"/><polyline points="435.8,538.3 473.3,561.7" fill="none" stroke="#2030d0" stroke-width="1"/><polygon points="408.3,560.0 418.3,556.7 473.3,561.7 533.3,526.7 552.5,505.0 553.3,536.7 526.7,563.3 473.3,606.7 456.7,612.5 408.3,607.5" fill="#012186" stroke="#1a22ee" stroke-width="1.3"/><polygon points="533.3,526.7 552.5,505.0 553.3,536.7 538.3,552.0" fill="#011a6c" stroke="#1a22ee" stroke-width="1"/><path d="M424 570c6-6 22-5 28 0c1 12-4 22-14 27c-9-3-15-14-14-27z" fill="#030306"/><polygon points="475.8,565.0 525.0,541.7 525.0,565.0 473.3,605.0" fill="#f2d01c"/><polygon points="473.3,580.0 473.3,605.0 461.5,609.5" fill="#e8c818"/><polygon points="526.7,540.0 538.3,533.3 538.3,550.0 526.7,560.0" fill="#e8e8e0" stroke="#101890" stroke-width="0.8"/><polyline points="408.3,560.0 408.3,607.5" fill="none" stroke="#30c8f0" stroke-width="1.3"/><polyline points="419.2,558.0 419.2,608.0" fill="none" stroke="#30c8f0" stroke-width="1.3"/><polyline points="456.7,565.0 456.7,612.5" fill="none" stroke="#1a22ee" stroke-width="1"/><g transform="translate(497 566) rotate(-27)"><path d="M-3 -9l5 4-5 4 5 4-5 4M3 -9l-5 4 5 4-5 4 5 4" fill="none" stroke="#1a3a98" stroke-width="1.800"/></g><text x="0" y="0" font-family="Liberation Sans,sans-serif" font-weight="bold" font-size="7" fill="#1a3a98" transform="translate(479 597.500) rotate(-35) skewX(-10) scale(.68 1)">BANCO DO BRASIL</text><polygon points="433.3,480.0 471.7,466.7 541.7,461.7 575.0,469.2 576.7,470.8 541.7,495.0 435.8,538.3 426.7,506.7" fill="#022795" stroke="#1a22ee" stroke-width="1.3"/><polygon points="545.0,463.0 575.0,469.5 576.7,470.8 541.7,495.0 536.0,480.0" fill="#050510"/><polygon points="446.0,478.0 470.0,468.0 520.0,464.0 500.0,490.0 452.0,512.0" fill="#0630a4"/><polygon points="440.0,505.0 470.0,494.0 500.0,492.0 470.0,512.0 445.0,522.0" fill="#042ca0"/><polygon points="433.3,480.0 441.0,478.0 447.0,503.0 438.0,512.0 426.7,506.7" fill="#011a6c" stroke="#1a22ee" stroke-width="1"/><polygon points="435.0,485.0 440.0,483.0 445.0,503.0 438.0,508.0 431.0,505.0" fill="#04040a"/><polygon points="450.0,494.0 462.0,488.0 470.0,498.0 458.0,508.0" fill="#0a1a70"/><polyline points="452.0,500.0 458.0,494.0" fill="none" stroke="#c8d0ff" stroke-width="1.5"/><polyline points="461.0,486.0 468.0,483.0" fill="none" stroke="#050508" stroke-width="2.5"/><text x="0" y="0" font-family="Liberation Sans,sans-serif" font-style="italic" font-size="8.500" fill="#f4f6ff" transform="translate(445.500 490.500) rotate(-24) scale(.85 1)">Clarins</text><polygon points="467.0,474.0 471.0,471.0 473.0,476.0 469.0,479.0" fill="#f4f4ff"/><polyline points="426.7,506.7 445.0,515.0" fill="none" stroke="#38d0e8" stroke-width="1.6"/><polyline points="435.8,538.3 541.7,495.0 576.7,470.8" fill="none" stroke="#38d0e8" stroke-width="1.8"/><polygon points="210.0,690.8 230.0,686.7 233.3,695.0 248.3,688.3 278.3,688.3 306.7,700.0 320.8,694.2 322.5,710.8 272.5,738.3 256.7,728.3" fill="#0a0a0e"/><polygon points="222.0,693.0 246.0,692.0 262.0,712.0 258.0,726.0 236.0,710.0" fill="#b4bcc4"/><polygon points="240.0,700.0 262.0,694.0 300.0,702.0 272.0,716.0" fill="#16181e"/><polygon points="246.0,712.0 268.0,704.0 275.0,716.0 258.0,724.0" fill="#d0d8dc"/><polygon points="250.0,718.0 274.0,708.0 280.0,714.0 262.0,727.0" fill="#101216"/><polygon points="270.8,721.7 319.2,698.3 320.8,710.8 272.5,737.5" fill="#042896"/><polyline points="210.0,690.8 256.7,728.3 272.5,738.3 322.5,710.8 320.8,694.2 306.7,700.0 278.3,688.3 248.3,688.3" fill="none" stroke="#e81010" stroke-width="2.9"/><polyline points="270.8,721.7 319.2,698.3" fill="none" stroke="#e81010" stroke-width="2.7"/><polyline points="270.8,721.7 272.5,738.3" fill="none" stroke="#e81010" stroke-width="2.7"/><polyline points="258.0,727.0 270.8,721.7" fill="none" stroke="#e81010" stroke-width="2.6"/><polyline points="255.0,695.0 278.0,712.0" fill="none" stroke="#40d0d0" stroke-width="1.2"/><polygon points="210.0,690.8 226.7,683.3 236.7,693.3 246.7,686.7 248.3,678.3 244.0,676.0 225.0,679.0 206.0,686.0" fill="#022795"/><polyline points="210.0,690.8 226.7,683.3 236.7,693.3 246.7,686.7 248.3,678.3" fill="none" stroke="#e81010" stroke-width="2.6"/><ellipse cx="341.4" cy="651.6" rx="26.0" ry="43.5" transform="rotate(30.0 341.4 651.6)" fill="#05050a" stroke="#1a22ee" stroke-width="1.6"/><polygon points="389.8,629.3 363.1,613.9 319.6,689.3 346.2,704.7" fill="#05050a"/><path d="M331.5 695.4L329.5 692.9L327.9 689.9L326.7 686.5L325.9 682.8L325.5 678.8L325.6 674.5L326.1 670.0L327.1 665.4L328.4 660.7L330.1 656.0L332.2 651.4L334.7 646.9L337.5 642.6L340.5 638.5L343.7 634.8L347.2 631.4L350.7 628.4L354.4 625.8L358.1 623.8L361.7 622.2L365.3 621.2L368.8 620.7L372.1 620.8L375.2 621.4" fill="none" stroke="#1a22ee" stroke-width="1.2"/><path d="M321.7 665.3L322.1 663.5L322.5 661.6L323.0 659.7L323.6 657.8L324.3 656.0L325.0 654.1L325.8 652.2L326.6 650.4L327.5 648.5L328.4 646.7L329.4 644.9L330.5 643.1L331.6 641.4L332.7 639.7L333.9 638.0L335.1 636.4L336.4 634.9L337.7 633.3L339.0 631.9L340.4 630.5L341.8 629.1L343.2 627.9L344.6 626.6L346.1 625.5" fill="none" stroke="#d01818" stroke-width="1.1" stroke-dasharray="7 4"/><path d="M343.3 702.5L316.7 687.1" stroke="#1a22ee" stroke-width="1.3"/><path d="M338.4 694.7L311.8 679.3" stroke="#1a22ee" stroke-width="1.3"/><path d="M336.7 683.8L310.1 668.4" stroke="#1a22ee" stroke-width="1.3"/><path d="M338.4 671.1L311.8 655.7" stroke="#1a22ee" stroke-width="1.3"/><path d="M343.3 658.0L316.7 642.6" stroke="#1a22ee" stroke-width="1.3"/><path d="M351.0 645.9L324.4 630.5" stroke="#1a22ee" stroke-width="1.3"/><path d="M360.4 636.0L333.8 620.6" stroke="#1a22ee" stroke-width="1.3"/><path d="M370.7 629.5L344.1 614.1" stroke="#1a22ee" stroke-width="1.3"/><path d="M380.7 627.2L354.1 611.8" stroke="#1a22ee" stroke-width="1.3"/><path d="M389.4 629.1L362.8 613.7" stroke="#1a22ee" stroke-width="1.3"/><path d="M389.8 629.3L363.1 613.9M346.2 704.7L319.6 689.3" stroke="#1a22ee" stroke-width="1.8"/><ellipse cx="368.0" cy="667.0" rx="26.0" ry="43.5" transform="rotate(30.0 368.0 667.0)" fill="#05050a" stroke="#1a22ee" stroke-width="2.2"/><ellipse cx="368.0" cy="667.0" rx="24.4" ry="41.3" transform="rotate(30.0 368.0 667.0)" fill="none" stroke="#3038b8" stroke-width="1.4"/><path d="M385.0 633.8L388.9 636.2L391.8 639.9L393.7 644.9L394.4 650.8L394.0 657.5L392.4 664.6L389.8 671.8L386.1 678.7L381.7 685.2L376.7 690.8L371.2 695.4L365.7 698.8L360.2 700.7L355.1 701.1L350.6 700.0L346.8 697.5L344.0 693.6L342.2 688.5L341.6 682.5L342.1 675.8L343.8 668.7L346.6 661.5L350.3 654.6L354.8 648.2" fill="none" stroke="#f0cc20" stroke-width="2.2" stroke-dasharray="14 6 3 2 3 2 3 2 3 6 30 8 3 2 3 2 3 2 3 40"/><text x="0" y="0" text-anchor="middle" font-family="Liberation Sans,sans-serif" font-weight="bold" font-style="italic" font-size="7.0" fill="#f4d428" transform="translate(368.3 639.7) rotate(-28.9) scale(.8 1)">PIRELLI</text><ellipse cx="369.0" cy="668.0" rx="19.2" ry="30.4" transform="rotate(30.0 369.0 668.0)" fill="#0a0a10" stroke="#e81010" stroke-width="2.4"/><clipPath id="wc1"><ellipse cx="369.0" cy="668.0" rx="18.2" ry="28.7" transform="rotate(30.0 369.0 668.0)" fill="#000"/></clipPath><g clip-path="url(#wc1)"><ellipse cx="369.0" cy="668.0" rx="19.2" ry="30.4" transform="rotate(30.0 369.0 668.0)" fill="#a4a4b4"/><path d="M391.6 658.4l-13.3 -7.7" stroke="#1a22ee" stroke-width="1.2"/><path d="M389.6 669.0l-13.3 -7.7" stroke="#1a22ee" stroke-width="1.2"/><path d="M384.6 679.4l-13.3 -7.7" stroke="#1a22ee" stroke-width="1.2"/><path d="M377.3 688.2l-13.3 -7.7" stroke="#1a22ee" stroke-width="1.2"/><path d="M368.8 694.0l-13.3 -7.7" stroke="#1a22ee" stroke-width="1.2"/><ellipse cx="361.0" cy="663.4" rx="18.7" ry="29.6" transform="rotate(30.0 361.0 663.4)" fill="#08080c" stroke="#e81010" stroke-width="2.2"/><ellipse cx="356.8" cy="660.9" rx="10.9" ry="21.8" transform="rotate(30.0 356.8 660.9)" fill="#b8bcc4"/><ellipse cx="356.8" cy="660.9" rx="5.7" ry="12.2" transform="rotate(30.0 356.8 660.9)" fill="#686c74"/><path d="M382.0 652.9L382.3 654.0L382.5 655.3L382.6 656.6L382.6 657.9L382.6 659.3L382.4 660.8L382.2 662.2L381.9 663.7L381.5 665.2L381.0 666.7L380.5 668.2L379.8 669.7L379.1 671.2L378.4 672.6L377.5 674.1L376.7 675.4L375.7 676.8L374.7 678.1L373.7 679.3L372.6 680.4L371.5 681.5L370.4 682.5L369.2 683.4L368.0 684.2" fill="none" stroke="#e8c820" stroke-width="1.4" stroke-dasharray="6 5"/></g><ellipse cx="612.2" cy="507.6" rx="19.1" ry="35.2" transform="rotate(24.0 612.2 507.6)" fill="#05050a" stroke="#1a22ee" stroke-width="1.6"/><polygon points="652.5,487.0 626.5,475.4 597.9,539.8 623.9,551.4" fill="#05050a"/><path d="M610.2 544.6L608.5 542.9L607.2 540.7L606.1 538.2L605.3 535.3L604.9 532.2L604.7 528.8L604.9 525.2L605.3 521.4L606.1 517.6L607.1 513.7L608.5 509.8L610.1 506.0L611.9 502.3L614.0 498.8L616.2 495.4L618.6 492.4L621.1 489.6L623.7 487.2L626.3 485.2L629.0 483.5L631.6 482.3L634.2 481.6L636.7 481.3L639.0 481.4" fill="none" stroke="#1a22ee" stroke-width="1.2"/><path d="M600.3 521.6L600.5 520.1L600.8 518.6L601.1 517.0L601.4 515.5L601.8 513.9L602.2 512.3L602.7 510.8L603.3 509.2L603.8 507.7L604.4 506.1L605.1 504.6L605.8 503.1L606.5 501.6L607.3 500.1L608.1 498.7L608.9 497.3L609.8 495.9L610.7 494.5L611.6 493.2L612.5 492.0L613.5 490.8L614.5 489.6L615.5 488.5L616.5 487.4" fill="none" stroke="#d01818" stroke-width="1.1" stroke-dasharray="7 4"/><path d="M621.6 550.0L595.6 538.4" stroke="#1a22ee" stroke-width="1.3"/><path d="M617.5 544.3L591.5 532.7" stroke="#1a22ee" stroke-width="1.3"/><path d="M615.7 535.9L589.7 524.3" stroke="#1a22ee" stroke-width="1.3"/><path d="M616.3 525.7L590.3 514.1" stroke="#1a22ee" stroke-width="1.3"/><path d="M619.4 514.8L593.4 503.2" stroke="#1a22ee" stroke-width="1.3"/><path d="M624.4 504.4L598.4 492.8" stroke="#1a22ee" stroke-width="1.3"/><path d="M631.0 495.6L605.0 484.0" stroke="#1a22ee" stroke-width="1.3"/><path d="M638.3 489.3L612.3 477.7" stroke="#1a22ee" stroke-width="1.3"/><path d="M645.7 486.3L619.7 474.7" stroke="#1a22ee" stroke-width="1.3"/><path d="M652.2 486.9L626.2 475.3" stroke="#1a22ee" stroke-width="1.3"/><path d="M652.5 487.0L626.5 475.4M623.9 551.4L597.9 539.8" stroke="#1a22ee" stroke-width="1.8"/><ellipse cx="638.2" cy="519.2" rx="19.1" ry="35.2" transform="rotate(24.0 638.2 519.2)" fill="#05050a" stroke="#1a22ee" stroke-width="2.2"/><ellipse cx="638.2" cy="519.2" rx="18.0" ry="33.4" transform="rotate(24.0 638.2 519.2)" fill="none" stroke="#3038b8" stroke-width="1.4"/><path d="M649.2 491.1L652.2 492.6L654.6 495.2L656.2 498.9L657.1 503.5L657.1 508.8L656.3 514.6L654.7 520.5L652.3 526.4L649.3 532.0L645.9 537.1L642.1 541.3L638.1 544.5L634.1 546.7L630.3 547.6L626.9 547.2L623.9 545.6L621.6 542.9L620.0 539.1L619.3 534.4L619.3 529.0L620.2 523.2L621.9 517.2L624.4 511.4L627.4 505.8" fill="none" stroke="#f0cc20" stroke-width="2.2" stroke-dasharray="14 6 3 2 3 2 3 2 3 6 30 8 3 2 3 2 3 2 3 40"/><text x="0" y="0" text-anchor="middle" font-family="Liberation Sans,sans-serif" font-weight="bold" font-style="italic" font-size="5.6" fill="#f4d428" transform="translate(637.1 497.6) rotate(-37.3) scale(.8 1)">PIRELLI</text><ellipse cx="639.2" cy="520.2" rx="14.1" ry="24.6" transform="rotate(24.0 639.2 520.2)" fill="#0a0a10" stroke="#e81010" stroke-width="2.4"/><clipPath id="wc2"><ellipse cx="639.2" cy="520.2" rx="13.4" ry="23.2" transform="rotate(24.0 639.2 520.2)" fill="#000"/></clipPath><g clip-path="url(#wc2)"><ellipse cx="639.2" cy="520.2" rx="14.1" ry="24.6" transform="rotate(24.0 639.2 520.2)" fill="#a4a4b4"/><path d="M655.5 510.1l-13.0 -5.8" stroke="#1a22ee" stroke-width="1.2"/><path d="M654.6 518.7l-13.0 -5.8" stroke="#1a22ee" stroke-width="1.2"/><path d="M651.4 527.5l-13.0 -5.8" stroke="#1a22ee" stroke-width="1.2"/><path d="M646.4 535.2l-13.0 -5.8" stroke="#1a22ee" stroke-width="1.2"/><path d="M640.4 540.8l-13.0 -5.8" stroke="#1a22ee" stroke-width="1.2"/><ellipse cx="631.4" cy="516.7" rx="13.8" ry="23.9" transform="rotate(24.0 631.4 516.7)" fill="#08080c" stroke="#e81010" stroke-width="2.2"/><ellipse cx="627.2" cy="514.9" rx="8.0" ry="17.6" transform="rotate(24.0 627.2 514.9)" fill="#b8bcc4"/><ellipse cx="627.2" cy="514.9" rx="4.2" ry="9.9" transform="rotate(24.0 627.2 514.9)" fill="#686c74"/><path d="M647.6 506.6L647.9 507.5L648.1 508.4L648.2 509.4L648.3 510.5L648.3 511.6L648.3 512.8L648.2 513.9L648.0 515.1L647.8 516.4L647.6 517.6L647.2 518.9L646.8 520.1L646.4 521.4L645.9 522.6L645.3 523.8L644.7 525.0L644.1 526.2L643.4 527.3L642.7 528.3L642.0 529.4L641.2 530.3L640.4 531.3L639.6 532.1L638.8 532.9" fill="none" stroke="#e8c820" stroke-width="1.4" stroke-dasharray="6 5"/></g></svg>
<svg class="a" style="left:0;top:0" width="1680" height="1050" viewBox="0 0 1680 1050"><rect x="970" y="126" width="592" height="836" fill="#000"/><rect x="967.500" y="123.500" width="591" height="835" fill="#fff" stroke="#000" stroke-width="1"/><rect x="1009.500" y="165.500" width="507" height="751" fill="none" stroke="#6a6a6a" stroke-width="1" stroke-dasharray="4 4"/><polygon points="1013.8,420.0 1022.5,411.5 1179.4,411.5 1187.8,420.0" fill="#fff" stroke="#000" stroke-width="1"/><polygon points="1013.8,482.8 1022.5,491.6 1179.4,491.6 1187.8,482.8" fill="#fff" stroke="#000" stroke-width="1"/><rect x="1013.800" y="420" width="174" height="62.800" fill="#000"/><path d="M1014 420.300h174M1014 482.500h174" stroke="#888" stroke-width=".6" stroke-dasharray="3 2"/><polygon points="1361.4,420.4 1370.7,428.5 1370.7,475.0 1361.4,482.5" fill="#fff" stroke="#000" stroke-width="1"/><rect x="1187.800" y="420.400" width="173.600" height="62.100" fill="#d8d8fc" stroke="#303048" stroke-width="1"/><path d="M1361.400 422v60" stroke="#8080b0" stroke-width="1" stroke-dasharray="2 2"/><polygon points="1022.5,500.4 1013.9,508.0 1013.9,552.5 1022.5,562.5" fill="#fff" stroke="#000" stroke-width="1"/><polygon points="1196.8,500.4 1205.4,508.0 1205.4,552.5 1196.8,562.5" fill="#fff" stroke="#000" stroke-width="1"/><polygon points="1022.5,625.0 1032.5,634.3 1188.6,634.3 1196.8,625.0" fill="#fff" stroke="#000" stroke-width="1"/><rect x="1022.500" y="500.400" width="174.300" height="124.600" fill="#d8d8fc" stroke="#303048" stroke-width="1"/><path d="M1022.500 502v60M1196.800 502v60M1023 625h174" stroke="#202030" stroke-width="1" stroke-dasharray="3 2"/><rect x="1013.900" y="642.500" width="174.700" height="63.200" fill="#d8d8fc" stroke="#303048" stroke-width="1"/><rect x="1196.400" y="642.500" width="174.800" height="63.200" fill="#d8d8fc" stroke="#303048" stroke-width="1"/><polygon points="1347.3,185.2 1370.5,183.2 1374.0,168.9 1440.1,168.9 1442.5,173.7 1459.8,173.7 1459.8,211.8 1441.9,211.8 1440.1,216.0 1374.0,216.0 1370.5,201.7 1347.3,199.9" fill="#000"/><polygon points="1468.1,177.9 1477.0,177.9 1477.0,175.5 1490.1,175.5 1490.1,187.4 1480.6,194.5 1480.6,207.0 1468.1,199.9" fill="#000"/><polygon points="1354.0,730.1 1377.2,728.1 1380.7,713.8 1446.8,713.8 1449.2,718.6 1466.5,718.6 1466.5,756.7 1448.6,756.7 1446.8,760.9 1380.7,760.9 1377.2,746.6 1354.0,744.8" fill="#000"/><rect x="1383.2" y="733.1" width="59.500" height="9.800" fill="#fff"/><path d="M1384.7 735.3h52.0" stroke="#000" stroke-width="1.400" stroke-dasharray="2.500 .8 1.200 .6 3 .7"/><path d="M1384.7 738.2h56.0" stroke="#000" stroke-width="1.400" stroke-dasharray="2.500 .8 1.200 .6 3 .7"/><path d="M1384.7 741.1h54.0" stroke="#000" stroke-width="1.400" stroke-dasharray="2.500 .8 1.200 .6 3 .7"/><polygon points="1013.8,777.8 1037.0,775.8 1040.5,761.5 1106.6,761.5 1109.0,766.3 1126.3,766.3 1126.3,804.4 1108.4,804.4 1106.6,808.6 1040.5,808.6 1037.0,794.3 1013.8,792.5" fill="#000"/><rect x="1043.0" y="780.8" width="59.500" height="9.800" fill="#fff"/><path d="M1044.5 783.0h52.0" stroke="#000" stroke-width="1.400" stroke-dasharray="2.500 .8 1.200 .6 3 .7"/><path d="M1044.5 785.9h56.0" stroke="#000" stroke-width="1.400" stroke-dasharray="2.500 .8 1.200 .6 3 .7"/><path d="M1044.5 788.8h54.0" stroke="#000" stroke-width="1.400" stroke-dasharray="2.500 .8 1.200 .6 3 .7"/><polygon points="1482.9,500.0 1496.2,500.0 1496.2,502.2 1504.8,502.2 1504.8,523.8 1492.9,531.0 1492.9,518.1 1482.9,511.4" fill="#000"/><polyline points="1388.0,457.1 1379.6,452.0 1389.1,449.5" fill="none" stroke="#000" stroke-width="1.1"/><polyline points="1389.1,449.5 1380.7,444.4 1390.1,441.9" fill="none" stroke="#000" stroke-width="1.1"/><polyline points="1390.1,441.9 1381.7,436.8 1391.2,434.2" fill="none" stroke="#000" stroke-width="1.1"/><polyline points="1391.2,434.2 1382.8,429.2 1392.2,426.6" fill="none" stroke="#000" stroke-width="1.1"/><polyline points="1392.2,426.6 1383.9,421.6 1393.3,419.0" fill="none" stroke="#000" stroke-width="1.1"/><polyline points="1404.8,420.5 1413.3,425.3 1403.9,428.1" fill="none" stroke="#000" stroke-width="1.1"/><polyline points="1403.9,428.1 1412.5,432.9 1403.1,435.7" fill="none" stroke="#000" stroke-width="1.1"/><polyline points="1403.1,435.7 1411.6,440.6 1402.2,443.4" fill="none" stroke="#000" stroke-width="1.1"/><polyline points="1402.2,443.4 1410.7,448.2 1401.4,451.0" fill="none" stroke="#000" stroke-width="1.1"/><polyline points="1401.4,451.0 1409.9,455.8 1400.5,458.6" fill="none" stroke="#000" stroke-width="1.1"/><polygon points="1393.3,419.0 1400.5,411.4 1404.8,420.5" fill="#fff" stroke="#000" stroke-width="0.9"/><polygon points="1393.3,419.0 1404.8,420.5 1400.5,458.6 1388.0,457.1" fill="#000"/><polyline points="1429.5,459.0 1420.1,456.4 1428.5,451.3" fill="none" stroke="#000" stroke-width="1.1"/><polyline points="1428.5,451.3 1419.0,448.7 1427.4,443.6" fill="none" stroke="#000" stroke-width="1.1"/><polyline points="1427.4,443.6 1418.0,441.0 1426.4,435.9" fill="none" stroke="#000" stroke-width="1.1"/><polyline points="1426.4,435.9 1416.9,433.3 1425.3,428.2" fill="none" stroke="#000" stroke-width="1.1"/><polyline points="1425.3,428.2 1415.9,425.6 1424.3,420.5" fill="none" stroke="#000" stroke-width="1.1"/><polyline points="1436.2,419.0 1445.6,421.6 1437.2,426.6" fill="none" stroke="#000" stroke-width="1.1"/><polyline points="1437.2,426.6 1446.7,429.2 1438.3,434.2" fill="none" stroke="#000" stroke-width="1.1"/><polyline points="1438.3,434.2 1447.7,436.8 1439.3,441.8" fill="none" stroke="#000" stroke-width="1.1"/><polyline points="1439.3,441.8 1448.8,444.4 1440.4,449.4" fill="none" stroke="#000" stroke-width="1.1"/><polyline points="1440.4,449.4 1449.8,452.0 1441.4,457.0" fill="none" stroke="#000" stroke-width="1.1"/><polygon points="1429.5,459.0 1436.7,466.7 1441.4,457.0" fill="#fff" stroke="#000" stroke-width="0.9"/><polygon points="1424.3,420.5 1436.2,419.0 1441.4,457.0 1429.5,459.0" fill="#000"/><polygon points="1424.3,439.9 1433.0,443.3 1423.7,443.5" fill="#fff" stroke="#000" stroke-width="1.1"/><polygon points="1422.8,445.3 1428.3,452.9 1420.3,448.0" fill="#fff" stroke="#000" stroke-width="1.1"/><polygon points="1418.5,449.1 1419.1,458.4 1415.0,450.0" fill="#fff" stroke="#000" stroke-width="1.1"/><polygon points="1413.0,449.9 1408.4,458.1 1409.5,448.8" fill="#fff" stroke="#000" stroke-width="1.1"/><polygon points="1407.8,447.6 1399.6,452.0 1405.5,444.8" fill="#fff" stroke="#000" stroke-width="1.1"/><polygon points="1404.7,442.9 1395.4,442.1 1404.3,439.3" fill="#fff" stroke="#000" stroke-width="1.1"/><polygon points="1404.7,437.3 1397.3,431.6 1406.3,434.0" fill="#fff" stroke="#000" stroke-width="1.1"/><polygon points="1407.7,432.5 1404.5,423.7 1410.8,430.6" fill="#fff" stroke="#000" stroke-width="1.1"/><polygon points="1412.8,430.1 1414.9,421.0 1416.4,430.2" fill="#fff" stroke="#000" stroke-width="1.1"/><polygon points="1418.4,430.9 1425.1,424.4 1421.4,432.9" fill="#fff" stroke="#000" stroke-width="1.1"/><polygon points="1422.7,434.5 1431.8,432.7 1424.1,437.9" fill="#fff" stroke="#000" stroke-width="1.1"/><circle cx="1414.3" cy="440.0" r="11.0" fill="#000"/><circle cx="1414.3" cy="440.0" r="9.0" fill="none" stroke="#f0e448" stroke-width="0.9" stroke-dasharray="3.5 1.2"/><circle cx="1414.3" cy="440.0" r="6.6" fill="#b0b4b8"/><circle cx="1414.3" cy="440.0" r="4.0" fill="none" stroke="#70747c" stroke-width="1.5" stroke-dasharray="1.5 1.5"/><circle cx="1414.3" cy="440.0" r="1.8" fill="#e8e8ec"/><polygon points="1461.4,439.4 1470.1,442.8 1460.8,443.0" fill="#fff" stroke="#000" stroke-width="1.1"/><polygon points="1459.9,444.8 1465.4,452.4 1457.4,447.5" fill="#fff" stroke="#000" stroke-width="1.1"/><polygon points="1455.6,448.6 1456.2,457.9 1452.1,449.5" fill="#fff" stroke="#000" stroke-width="1.1"/><polygon points="1450.1,449.4 1445.5,457.6 1446.6,448.3" fill="#fff" stroke="#000" stroke-width="1.1"/><polygon points="1444.9,447.1 1436.7,451.5 1442.6,444.3" fill="#fff" stroke="#000" stroke-width="1.1"/><polygon points="1441.8,442.4 1432.5,441.6 1441.4,438.8" fill="#fff" stroke="#000" stroke-width="1.1"/><polygon points="1441.8,436.8 1434.4,431.1 1443.4,433.5" fill="#fff" stroke="#000" stroke-width="1.1"/><polygon points="1444.8,432.0 1441.6,423.2 1447.9,430.1" fill="#fff" stroke="#000" stroke-width="1.1"/><polygon points="1449.9,429.6 1452.0,420.5 1453.5,429.7" fill="#fff" stroke="#000" stroke-width="1.1"/><polygon points="1455.5,430.4 1462.2,423.9 1458.5,432.4" fill="#fff" stroke="#000" stroke-width="1.1"/><polygon points="1459.8,434.0 1468.9,432.2 1461.2,437.4" fill="#fff" stroke="#000" stroke-width="1.1"/><circle cx="1451.4" cy="439.5" r="11.0" fill="#000"/><circle cx="1451.4" cy="439.5" r="9.0" fill="none" stroke="#f0e448" stroke-width="0.9" stroke-dasharray="3.5 1.2"/><circle cx="1451.4" cy="439.5" r="6.6" fill="#fff"/><polygon points="1480.0,420.0 1488.1,420.0 1489.0,417.6 1501.9,417.6 1501.9,428.6 1492.4,436.7 1491.9,448.6 1480.0,441.9" fill="#f4f8fc" stroke="#222" stroke-width="1.1"/><rect x="1485.0" y="421.5" width="3.500" height="3.500" fill="#a020a0"/><rect x="1481.5" y="427.0" width="10.500" height="2.600" fill="#d02020"/><rect x="1494.5" y="420.0" width="5" height="1.500" fill="#90b0d0"/><rect x="1485.0" y="433.0" width="4" height="2.500" fill="#607850"/><polygon points="1483.0,439.5 1490.5,443.8 1490.5,447.0 1483.0,443.0" fill="#181818"/><polyline points="1412.9,546.2 1404.6,541.1 1414.0,538.6" fill="none" stroke="#000" stroke-width="1.1"/><polyline points="1414.0,538.6 1405.7,533.4 1415.2,531.0" fill="none" stroke="#000" stroke-width="1.1"/><polyline points="1415.2,531.0 1406.8,525.8 1416.3,523.3" fill="none" stroke="#000" stroke-width="1.1"/><polyline points="1416.3,523.3 1408.0,518.2 1417.5,515.7" fill="none" stroke="#000" stroke-width="1.1"/><polyline points="1417.5,515.7 1409.1,510.6 1418.6,508.1" fill="none" stroke="#000" stroke-width="1.1"/><polyline points="1430.5,509.0 1438.9,514.1 1429.4,516.8" fill="none" stroke="#000" stroke-width="1.1"/><polyline points="1429.4,516.8 1437.8,521.9 1428.4,524.6" fill="none" stroke="#000" stroke-width="1.1"/><polyline points="1428.4,524.6 1436.8,529.8 1427.3,532.5" fill="none" stroke="#000" stroke-width="1.1"/><polyline points="1427.3,532.5 1435.7,537.6 1426.3,540.3" fill="none" stroke="#000" stroke-width="1.1"/><polyline points="1426.3,540.3 1434.6,545.4 1425.2,548.1" fill="none" stroke="#000" stroke-width="1.1"/><polygon points="1418.6,508.1 1425.7,500.0 1430.5,509.0" fill="#fff" stroke="#000" stroke-width="0.9"/><polygon points="1418.6,508.1 1430.5,509.0 1425.2,548.1 1412.9,546.2" fill="#000"/><polyline points="1454.8,548.1 1445.3,545.5 1453.6,540.3" fill="none" stroke="#000" stroke-width="1.1"/><polyline points="1453.6,540.3 1444.2,537.7 1452.5,532.5" fill="none" stroke="#000" stroke-width="1.1"/><polyline points="1452.5,532.5 1443.0,529.9 1451.3,524.6" fill="none" stroke="#000" stroke-width="1.1"/><polyline points="1451.3,524.6 1441.8,522.1 1450.2,516.8" fill="none" stroke="#000" stroke-width="1.1"/><polyline points="1450.2,516.8 1440.7,514.2 1449.0,509.0" fill="none" stroke="#000" stroke-width="1.1"/><polyline points="1461.0,508.1 1470.5,510.6 1462.1,515.7" fill="none" stroke="#000" stroke-width="1.1"/><polyline points="1462.1,515.7 1471.6,518.2 1463.3,523.3" fill="none" stroke="#000" stroke-width="1.1"/><polyline points="1463.3,523.3 1472.8,525.8 1464.4,531.0" fill="none" stroke="#000" stroke-width="1.1"/><polyline points="1464.4,531.0 1473.9,533.4 1465.6,538.6" fill="none" stroke="#000" stroke-width="1.1"/><polyline points="1465.6,538.6 1475.0,541.1 1466.7,546.2" fill="none" stroke="#000" stroke-width="1.1"/><polygon points="1454.8,548.1 1461.9,555.7 1466.7,546.2" fill="#fff" stroke="#000" stroke-width="0.9"/><polygon points="1449.0,509.0 1461.0,508.1 1466.7,546.2 1454.8,548.1" fill="#000"/><polygon points="1412.9,527.0 1421.6,530.4 1412.3,530.6" fill="#fff" stroke="#000" stroke-width="1.1"/><polygon points="1411.4,532.4 1416.9,540.0 1408.9,535.1" fill="#fff" stroke="#000" stroke-width="1.1"/><polygon points="1407.1,536.2 1407.7,545.5 1403.6,537.1" fill="#fff" stroke="#000" stroke-width="1.1"/><polygon points="1401.6,537.0 1397.0,545.2 1398.1,535.9" fill="#fff" stroke="#000" stroke-width="1.1"/><polygon points="1396.4,534.7 1388.2,539.1 1394.1,531.9" fill="#fff" stroke="#000" stroke-width="1.1"/><polygon points="1393.3,530.0 1384.0,529.2 1392.9,526.4" fill="#fff" stroke="#000" stroke-width="1.1"/><polygon points="1393.3,524.4 1385.9,518.7 1394.9,521.1" fill="#fff" stroke="#000" stroke-width="1.1"/><polygon points="1396.3,519.6 1393.1,510.8 1399.4,517.7" fill="#fff" stroke="#000" stroke-width="1.1"/><polygon points="1401.4,517.2 1403.5,508.1 1405.0,517.3" fill="#fff" stroke="#000" stroke-width="1.1"/><polygon points="1407.0,518.0 1413.7,511.5 1410.0,520.0" fill="#fff" stroke="#000" stroke-width="1.1"/><polygon points="1411.3,521.6 1420.4,519.8 1412.7,525.0" fill="#fff" stroke="#000" stroke-width="1.1"/><circle cx="1402.9" cy="527.1" r="11.0" fill="#000"/><circle cx="1402.9" cy="527.1" r="9.0" fill="none" stroke="#f0e448" stroke-width="0.9" stroke-dasharray="3.5 1.2"/><circle cx="1402.9" cy="527.1" r="6.6" fill="#fff"/><polygon points="1450.0,528.9 1458.7,532.3 1449.4,532.5" fill="#fff" stroke="#000" stroke-width="1.1"/><polygon points="1448.5,534.3 1454.0,541.9 1446.0,537.0" fill="#fff" stroke="#000" stroke-width="1.1"/><polygon points="1444.2,538.1 1444.8,547.4 1440.7,539.0" fill="#fff" stroke="#000" stroke-width="1.1"/><polygon points="1438.7,538.9 1434.1,547.1 1435.2,537.8" fill="#fff" stroke="#000" stroke-width="1.1"/><polygon points="1433.5,536.6 1425.3,541.0 1431.2,533.8" fill="#fff" stroke="#000" stroke-width="1.1"/><polygon points="1430.4,531.9 1421.1,531.1 1430.0,528.3" fill="#fff" stroke="#000" stroke-width="1.1"/><polygon points="1430.4,526.3 1423.0,520.6 1432.0,523.0" fill="#fff" stroke="#000" stroke-width="1.1"/><polygon points="1433.4,521.5 1430.2,512.7 1436.5,519.6" fill="#fff" stroke="#000" stroke-width="1.1"/><polygon points="1438.5,519.1 1440.6,510.0 1442.1,519.2" fill="#fff" stroke="#000" stroke-width="1.1"/><polygon points="1444.1,519.9 1450.8,513.4 1447.1,521.9" fill="#fff" stroke="#000" stroke-width="1.1"/><polygon points="1448.4,523.5 1457.5,521.7 1449.8,526.9" fill="#fff" stroke="#000" stroke-width="1.1"/><circle cx="1440.0" cy="529.0" r="11.0" fill="#000"/><circle cx="1440.0" cy="529.0" r="9.0" fill="none" stroke="#f0e448" stroke-width="0.9" stroke-dasharray="3.5 1.2"/><circle cx="1440.0" cy="529.0" r="6.6" fill="#b0b4b8"/><circle cx="1440.0" cy="529.0" r="4.0" fill="none" stroke="#70747c" stroke-width="1.5" stroke-dasharray="1.5 1.5"/><circle cx="1440.0" cy="529.0" r="1.8" fill="#e8e8ec"/><polyline points="1409.5,687.1 1401.2,682.1 1410.6,679.8" fill="none" stroke="#000" stroke-width="1.1"/><polyline points="1410.6,679.8 1402.3,674.7 1411.8,672.5" fill="none" stroke="#000" stroke-width="1.1"/><polyline points="1411.8,672.5 1403.5,667.4 1412.9,665.1" fill="none" stroke="#000" stroke-width="1.1"/><polyline points="1412.9,665.1 1404.6,660.1 1414.1,657.8" fill="none" stroke="#000" stroke-width="1.1"/><polyline points="1414.1,657.8 1405.7,652.8 1415.2,650.5" fill="none" stroke="#000" stroke-width="1.1"/><polyline points="1426.7,651.4 1435.1,656.3 1425.7,659.0" fill="none" stroke="#000" stroke-width="1.1"/><polyline points="1425.7,659.0 1434.2,664.0 1424.8,666.6" fill="none" stroke="#000" stroke-width="1.1"/><polyline points="1424.8,666.6 1433.2,671.6 1423.8,674.3" fill="none" stroke="#000" stroke-width="1.1"/><polyline points="1423.8,674.3 1432.3,679.2 1422.9,681.9" fill="none" stroke="#000" stroke-width="1.1"/><polyline points="1422.9,681.9 1431.3,686.8 1421.9,689.5" fill="none" stroke="#000" stroke-width="1.1"/><polygon points="1415.2,650.5 1422.2,642.9 1426.7,651.4" fill="#fff" stroke="#000" stroke-width="0.9"/><polygon points="1415.2,650.5 1426.7,651.4 1421.9,689.5 1409.5,687.1" fill="#000"/><polyline points="1451.0,690.0 1441.6,687.3 1450.0,682.3" fill="none" stroke="#000" stroke-width="1.1"/><polyline points="1450.0,682.3 1440.6,679.5 1449.1,674.6" fill="none" stroke="#000" stroke-width="1.1"/><polyline points="1449.1,674.6 1439.7,671.8 1448.1,666.8" fill="none" stroke="#000" stroke-width="1.1"/><polyline points="1448.1,666.8 1438.7,664.1 1447.2,659.1" fill="none" stroke="#000" stroke-width="1.1"/><polyline points="1447.2,659.1 1437.7,656.4 1446.2,651.4" fill="none" stroke="#000" stroke-width="1.1"/><polyline points="1458.1,650.5 1467.5,653.1 1459.1,658.0" fill="none" stroke="#000" stroke-width="1.1"/><polyline points="1459.1,658.0 1468.5,660.6 1460.0,665.5" fill="none" stroke="#000" stroke-width="1.1"/><polyline points="1460.0,665.5 1469.4,668.2 1461.0,673.1" fill="none" stroke="#000" stroke-width="1.1"/><polyline points="1461.0,673.1 1470.4,675.7 1461.9,680.6" fill="none" stroke="#000" stroke-width="1.1"/><polyline points="1461.9,680.6 1471.3,683.2 1462.9,688.1" fill="none" stroke="#000" stroke-width="1.1"/><polygon points="1451.0,690.0 1458.6,698.1 1462.9,688.1" fill="#fff" stroke="#000" stroke-width="0.9"/><polygon points="1446.2,651.4 1458.1,650.5 1462.9,688.1 1451.0,690.0" fill="#000"/><polygon points="1409.5,669.4 1418.2,672.8 1408.9,673.0" fill="#fff" stroke="#000" stroke-width="1.1"/><polygon points="1408.0,674.8 1413.5,682.4 1405.5,677.5" fill="#fff" stroke="#000" stroke-width="1.1"/><polygon points="1403.7,678.6 1404.3,687.9 1400.2,679.5" fill="#fff" stroke="#000" stroke-width="1.1"/><polygon points="1398.2,679.4 1393.6,687.6 1394.7,678.3" fill="#fff" stroke="#000" stroke-width="1.1"/><polygon points="1393.0,677.1 1384.8,681.5 1390.7,674.3" fill="#fff" stroke="#000" stroke-width="1.1"/><polygon points="1389.9,672.4 1380.6,671.6 1389.5,668.8" fill="#fff" stroke="#000" stroke-width="1.1"/><polygon points="1389.9,666.8 1382.5,661.1 1391.5,663.5" fill="#fff" stroke="#000" stroke-width="1.1"/><polygon points="1392.9,662.0 1389.7,653.2 1396.0,660.1" fill="#fff" stroke="#000" stroke-width="1.1"/><polygon points="1398.0,659.6 1400.1,650.5 1401.6,659.7" fill="#fff" stroke="#000" stroke-width="1.1"/><polygon points="1403.6,660.4 1410.3,653.9 1406.6,662.4" fill="#fff" stroke="#000" stroke-width="1.1"/><polygon points="1407.9,664.0 1417.0,662.2 1409.3,667.4" fill="#fff" stroke="#000" stroke-width="1.1"/><circle cx="1399.5" cy="669.5" r="11.0" fill="#000"/><circle cx="1399.5" cy="669.5" r="9.0" fill="none" stroke="#f0e448" stroke-width="0.9" stroke-dasharray="3.5 1.2"/><circle cx="1399.5" cy="669.5" r="6.6" fill="#fff"/><polygon points="1445.7,670.9 1454.4,674.3 1445.1,674.5" fill="#fff" stroke="#000" stroke-width="1.1"/><polygon points="1444.2,676.3 1449.7,683.9 1441.7,679.0" fill="#fff" stroke="#000" stroke-width="1.1"/><polygon points="1439.9,680.1 1440.5,689.4 1436.4,681.0" fill="#fff" stroke="#000" stroke-width="1.1"/><polygon points="1434.4,680.9 1429.8,689.1 1430.9,679.8" fill="#fff" stroke="#000" stroke-width="1.1"/><polygon points="1429.2,678.6 1421.0,683.0 1426.9,675.8" fill="#fff" stroke="#000" stroke-width="1.1"/><polygon points="1426.1,673.9 1416.8,673.1 1425.7,670.3" fill="#fff" stroke="#000" stroke-width="1.1"/><polygon points="1426.1,668.3 1418.7,662.6 1427.7,665.0" fill="#fff" stroke="#000" stroke-width="1.1"/><polygon points="1429.1,663.5 1425.9,654.7 1432.2,661.6" fill="#fff" stroke="#000" stroke-width="1.1"/><polygon points="1434.2,661.1 1436.3,652.0 1437.8,661.2" fill="#fff" stroke="#000" stroke-width="1.1"/><polygon points="1439.8,661.9 1446.5,655.4 1442.8,663.9" fill="#fff" stroke="#000" stroke-width="1.1"/><polygon points="1444.1,665.5 1453.2,663.7 1445.5,668.9" fill="#fff" stroke="#000" stroke-width="1.1"/><circle cx="1435.7" cy="671.0" r="11.0" fill="#000"/><circle cx="1435.7" cy="671.0" r="9.0" fill="none" stroke="#f0e448" stroke-width="0.9" stroke-dasharray="3.5 1.2"/><circle cx="1435.7" cy="671.0" r="6.6" fill="#b0b4b8"/><circle cx="1435.7" cy="671.0" r="4.0" fill="none" stroke="#70747c" stroke-width="1.5" stroke-dasharray="1.5 1.5"/><circle cx="1435.7" cy="671.0" r="1.8" fill="#e8e8ec"/><polygon points="1479.5,642.4 1491.9,642.4 1492.9,644.8 1501.4,644.8 1501.4,665.7 1489.5,673.3 1489.0,661.4 1479.5,653.3" fill="#f4f8fc" stroke="#222" stroke-width="1.1"/><rect x="1493" y="646.500" width="3.500" height="3.500" fill="#a020a0"/><rect x="1490.500" y="652" width="10" height="2.600" fill="#d02020"/><rect x="1481" y="644" width="6" height="1.500" fill="#90b0d0"/><rect x="1494" y="658.500" width="4" height="2.500" fill="#607850"/><polygon points="1492.0,666.0 1500.5,660.5 1500.5,664.5 1492.0,670.5" fill="#181818"/><polyline points="1047.6,863.0 1038.4,859.6 1047.2,855.3" fill="none" stroke="#000" stroke-width="1.1"/><polyline points="1047.2,855.3 1038.0,851.9 1046.8,847.5" fill="none" stroke="#000" stroke-width="1.1"/><polyline points="1046.8,847.5 1037.6,844.1 1046.4,839.8" fill="none" stroke="#000" stroke-width="1.1"/><polyline points="1046.4,839.8 1037.2,836.4 1046.0,832.0" fill="none" stroke="#000" stroke-width="1.1"/><polyline points="1046.0,832.0 1036.8,828.6 1045.6,824.3" fill="none" stroke="#000" stroke-width="1.1"/><polyline points="1057.3,824.3 1066.5,827.5 1057.8,831.9" fill="none" stroke="#000" stroke-width="1.1"/><polyline points="1057.8,831.9 1067.1,835.0 1058.4,839.5" fill="none" stroke="#000" stroke-width="1.1"/><polyline points="1058.4,839.5 1067.6,842.6 1058.9,847.0" fill="none" stroke="#000" stroke-width="1.1"/><polyline points="1058.9,847.0 1068.2,850.2 1059.5,854.6" fill="none" stroke="#000" stroke-width="1.1"/><polyline points="1059.5,854.6 1068.7,857.8 1060.0,862.2" fill="none" stroke="#000" stroke-width="1.1"/><polygon points="1047.6,863.0 1054.2,871.5 1060.0,862.2" fill="#fff" stroke="#000" stroke-width="0.9"/><polygon points="1045.6,824.3 1057.3,824.3 1060.0,862.2 1047.6,863.0" fill="#000"/><polyline points="1084.0,864.2 1074.8,860.9 1083.5,856.5" fill="none" stroke="#000" stroke-width="1.1"/><polyline points="1083.5,856.5 1074.3,853.1 1083.0,848.7" fill="none" stroke="#000" stroke-width="1.1"/><polyline points="1083.0,848.7 1073.8,845.4 1082.6,841.0" fill="none" stroke="#000" stroke-width="1.1"/><polyline points="1082.6,841.0 1073.3,837.7 1082.1,833.2" fill="none" stroke="#000" stroke-width="1.1"/><polyline points="1082.1,833.2 1072.9,829.9 1081.6,825.5" fill="none" stroke="#000" stroke-width="1.1"/><polyline points="1093.5,825.0 1102.7,828.3 1093.9,832.6" fill="none" stroke="#000" stroke-width="1.1"/><polyline points="1093.9,832.6 1103.1,835.9 1094.3,840.2" fill="none" stroke="#000" stroke-width="1.1"/><polyline points="1094.3,840.2 1103.5,843.5 1094.8,847.8" fill="none" stroke="#000" stroke-width="1.1"/><polyline points="1094.8,847.8 1104.0,851.1 1095.2,855.4" fill="none" stroke="#000" stroke-width="1.1"/><polyline points="1095.2,855.4 1104.4,858.7 1095.6,863.0" fill="none" stroke="#000" stroke-width="1.1"/><polygon points="1081.6,825.5 1087.0,816.9 1093.5,825.0" fill="#fff" stroke="#000" stroke-width="0.9"/><polygon points="1081.6,825.5 1093.5,825.0 1095.6,863.0 1084.0,864.2" fill="#000"/><polygon points="1044.4,842.8 1053.1,846.2 1043.8,846.4" fill="#fff" stroke="#000" stroke-width="1.1"/><polygon points="1042.9,848.2 1048.4,855.8 1040.4,850.9" fill="#fff" stroke="#000" stroke-width="1.1"/><polygon points="1038.6,852.0 1039.2,861.3 1035.1,852.9" fill="#fff" stroke="#000" stroke-width="1.1"/><polygon points="1033.1,852.8 1028.5,861.0 1029.6,851.7" fill="#fff" stroke="#000" stroke-width="1.1"/><polygon points="1027.9,850.5 1019.7,854.9 1025.6,847.7" fill="#fff" stroke="#000" stroke-width="1.1"/><polygon points="1024.8,845.8 1015.5,845.0 1024.4,842.2" fill="#fff" stroke="#000" stroke-width="1.1"/><polygon points="1024.8,840.2 1017.4,834.5 1026.4,836.9" fill="#fff" stroke="#000" stroke-width="1.1"/><polygon points="1027.8,835.4 1024.6,826.6 1030.9,833.5" fill="#fff" stroke="#000" stroke-width="1.1"/><polygon points="1032.9,833.0 1035.0,823.9 1036.5,833.1" fill="#fff" stroke="#000" stroke-width="1.1"/><polygon points="1038.5,833.8 1045.2,827.3 1041.5,835.8" fill="#fff" stroke="#000" stroke-width="1.1"/><polygon points="1042.8,837.4 1051.9,835.6 1044.2,840.8" fill="#fff" stroke="#000" stroke-width="1.1"/><circle cx="1034.4" cy="842.9" r="11.0" fill="#000"/><circle cx="1034.4" cy="842.9" r="9.0" fill="none" stroke="#f0e448" stroke-width="0.9" stroke-dasharray="3.5 1.2"/><circle cx="1034.4" cy="842.9" r="6.6" fill="#b0b4b8"/><circle cx="1034.4" cy="842.9" r="4.0" fill="none" stroke="#70747c" stroke-width="1.5" stroke-dasharray="1.5 1.5"/><circle cx="1034.4" cy="842.9" r="1.8" fill="#e8e8ec"/><polygon points="1080.3,843.5 1089.0,846.9 1079.7,847.0" fill="#fff" stroke="#000" stroke-width="1.1"/><polygon points="1078.8,848.8 1084.3,856.4 1076.4,851.4" fill="#fff" stroke="#000" stroke-width="1.1"/><polygon points="1074.6,852.5 1075.2,861.8 1071.2,853.4" fill="#fff" stroke="#000" stroke-width="1.1"/><polygon points="1069.2,853.3 1064.6,861.5 1065.8,852.2" fill="#fff" stroke="#000" stroke-width="1.1"/><polygon points="1064.1,851.1 1055.9,855.5 1061.9,848.3" fill="#fff" stroke="#000" stroke-width="1.1"/><polygon points="1061.1,846.4 1051.8,845.7 1060.7,842.9" fill="#fff" stroke="#000" stroke-width="1.1"/><polygon points="1061.1,840.9 1053.7,835.3 1062.7,837.7" fill="#fff" stroke="#000" stroke-width="1.1"/><polygon points="1064.0,836.2 1060.8,827.5 1067.1,834.4" fill="#fff" stroke="#000" stroke-width="1.1"/><polygon points="1069.0,833.9 1071.1,824.8 1072.6,834.0" fill="#fff" stroke="#000" stroke-width="1.1"/><polygon points="1074.5,834.7 1081.2,828.1 1077.4,836.7" fill="#fff" stroke="#000" stroke-width="1.1"/><polygon points="1078.7,838.2 1087.8,836.3 1080.1,841.5" fill="#fff" stroke="#000" stroke-width="1.1"/><circle cx="1070.5" cy="843.6" r="10.8" fill="#000"/><circle cx="1070.5" cy="843.6" r="8.9" fill="none" stroke="#f0e448" stroke-width="0.9" stroke-dasharray="3.5 1.2"/><circle cx="1070.5" cy="843.6" r="6.5" fill="#fff"/><polyline points="1052.0,190.7 1039.5,190.0 1042.0,203.0" fill="none" stroke="#000" stroke-width="1.15"/><polyline points="1034.0,211.0 1021.5,216.0 1019.5,226.0 1025.7,235.7" fill="none" stroke="#000" stroke-width="1.15"/><polyline points="1025.7,235.7 1024.0,252.0 1035.0,250.0" fill="none" stroke="#000" stroke-width="1.15"/><polyline points="1056.0,193.6 1063.0,200.0 1051.0,216.0 1059.0,211.0" fill="none" stroke="#000" stroke-width="1.15"/><polyline points="1051.0,216.0 1048.0,232.0 1052.0,238.0" fill="none" stroke="#000" stroke-width="1.15"/><polyline points="1070.0,194.0 1079.5,201.5 1073.0,211.0 1079.5,228.0 1078.0,243.0 1068.6,247.0" fill="none" stroke="#000" stroke-width="1.15"/><polyline points="1068.6,247.0 1060.0,262.0 1049.0,258.0" fill="none" stroke="#000" stroke-width="1.15"/><polyline points="1034.0,262.0 1022.5,270.0 1030.0,276.0 1028.0,283.0" fill="none" stroke="#000" stroke-width="1.15"/><polyline points="1046.0,266.0 1052.5,278.0 1043.0,280.0" fill="none" stroke="#000" stroke-width="1.15"/><polyline points="1027.0,292.0 1014.0,299.0 1019.0,312.0 1022.0,322.0" fill="none" stroke="#000" stroke-width="1.15"/><polyline points="1038.5,292.0 1043.0,304.0 1031.0,314.0" fill="none" stroke="#000" stroke-width="1.15"/><polygon points="1065.7,169.3 1069.5,170.7 1070.2,194.5 1064.8,193.6 1065.3,178.0 1057.0,193.9 1051.6,190.4" fill="#111"/><polygon points="1051.6,190.4 1057.0,193.9 1051.0,210.0 1046.0,228.0 1041.5,240.0 1036.0,248.0 1025.7,235.7 1029.5,221.0 1037.0,205.0" fill="#0a2ca4"/><polygon points="1065.0,193.6 1070.0,194.0 1071.4,214.0 1070.5,232.0 1068.6,247.0 1052.0,250.0 1054.0,240.0 1059.0,222.0 1063.0,206.0" fill="#0a2ca4"/><polygon points="1036.0,248.0 1041.0,240.0 1054.0,240.0 1052.0,250.0 1048.6,260.0 1040.0,290.0 1034.5,310.0 1029.0,322.0 1021.4,322.9 1024.5,305.0 1027.0,290.0 1034.0,260.0" fill="#0a2ca4"/><polygon points="1037.0,244.0 1047.0,243.0 1048.6,252.0 1046.0,260.0 1036.5,259.0" fill="#151210"/><circle cx="1038.500" cy="271" r="3.500" fill="none" stroke="#c8d4ff" stroke-width="1" stroke-dasharray="1.200 1"/><text x="1027" y="307" font-family="Liberation Sans,sans-serif" font-weight="bold" font-size="6.500" fill="#fff" transform="rotate(14 1029 305)">9</text><path d="M1027.500 296l7 1.500" stroke="#dde" stroke-width="1"/><polyline points="1057.0,317.9 1064.5,309.5 1073.0,319.8" fill="none" stroke="#000" stroke-width="1.15"/><polyline points="1083.0,322.5 1088.0,314.0 1091.0,324.5" fill="none" stroke="#000" stroke-width="1.15"/><polyline points="1095.0,325.5 1098.5,316.5 1100.5,327.5" fill="none" stroke="#000" stroke-width="1.15"/><polyline points="1110.0,330.0 1115.0,320.5 1117.0,331.5" fill="none" stroke="#000" stroke-width="1.15"/><polyline points="1145.0,340.5 1151.5,333.0 1154.0,343.0" fill="none" stroke="#000" stroke-width="1.15"/><polyline points="1200.0,354.5 1206.0,347.0 1209.5,356.0" fill="none" stroke="#000" stroke-width="1.15"/><polyline points="1240.0,360.4 1244.0,352.5 1246.0,362.0" fill="none" stroke="#000" stroke-width="1.15"/><polyline points="1256.0,365.0 1260.0,356.5 1262.0,366.8" fill="none" stroke="#000" stroke-width="1.15"/><polyline points="1266.0,368.0 1271.0,359.0 1273.0,369.5" fill="none" stroke="#000" stroke-width="1.15"/><polyline points="1284.0,372.0 1293.5,366.5 1298.0,377.5" fill="none" stroke="#000" stroke-width="1.15"/><polyline points="1311.0,387.0 1323.5,386.0 1318.0,394.0" fill="none" stroke="#000" stroke-width="1.15"/><polyline points="1034.0,325.7 1044.0,334.5 1053.0,326.3" fill="none" stroke="#000" stroke-width="1.15"/><polyline points="1070.0,329.0 1071.5,339.5 1079.0,333.5" fill="none" stroke="#000" stroke-width="1.15"/><polyline points="1164.0,358.6 1169.0,369.0 1177.0,362.0" fill="none" stroke="#000" stroke-width="1.15"/><polyline points="1184.0,364.0 1189.0,375.0 1199.0,368.0" fill="none" stroke="#000" stroke-width="1.15"/><polyline points="1207.0,370.0 1224.0,384.5 1233.0,377.0" fill="none" stroke="#000" stroke-width="1.15"/><polyline points="1240.0,379.0 1245.0,389.5 1251.0,381.5" fill="none" stroke="#000" stroke-width="1.15"/><polyline points="1256.0,382.8 1257.0,392.5 1264.0,381.8" fill="none" stroke="#000" stroke-width="1.15"/><polyline points="1268.0,381.0 1275.0,390.5 1280.0,381.0" fill="none" stroke="#000" stroke-width="1.15"/><polyline points="1297.0,386.5 1302.0,398.0 1312.0,397.8" fill="none" stroke="#000" stroke-width="1.15"/><polygon points="1030.0,322.0 1042.0,319.5 1057.0,317.9 1070.0,319.5 1085.7,322.9 1100.0,327.0 1114.0,330.7 1132.0,336.5 1150.0,342.0 1168.0,348.0 1185.7,352.9 1203.0,355.0 1220.0,357.0 1238.6,360.0 1262.9,367.0 1278.0,370.5 1291.0,374.0 1302.0,380.0 1311.0,387.0 1320.0,395.7 1318.6,400.0 1313.0,398.6 1306.0,393.0 1300.0,388.6 1292.0,384.0 1284.0,381.0 1270.0,381.0 1255.7,382.9 1238.6,378.6 1220.0,374.0 1203.0,369.0 1184.0,364.0 1164.0,358.6 1142.9,352.9 1125.0,349.0 1108.6,345.0 1096.0,341.0 1085.7,337.0 1075.0,331.0 1064.0,327.0 1048.0,326.0 1034.0,325.7" fill="#0a2ca4"/><ellipse cx="1103.500" cy="332.500" rx="4.800" ry="6.300" fill="#0a0a10" transform="rotate(15 1103.500 332.500)"/><ellipse cx="1250" cy="372" rx="4.800" ry="6" fill="#0a0a10" transform="rotate(15 1250 372)"/><polygon points="1114.3,332.9 1148.6,345.0 1142.9,352.9 1108.6,345.0" fill="#f8d418"/><polygon points="1146.5,345.5 1151.5,347.2 1148.5,354.5 1143.5,352.8" fill="#f4f4f8"/><polygon points="1200.0,361.0 1207.0,359.8 1240.0,368.5 1238.6,378.6 1207.0,368.5" fill="#f8d418"/><polygon points="1200.0,361.0 1207.0,359.8 1207.0,368.5 1201.0,366.5" fill="#f4f4f8"/><polygon points="1158.0,346.0 1166.4,349.3 1165.0,359.3 1154.0,356.0" fill="#0a0a10"/><polygon points="1185.7,352.9 1192.0,360.0 1190.0,366.0 1183.6,364.3" fill="#0a0a10"/><polygon points="1166.4,349.3 1185.7,352.9 1183.6,364.3 1165.0,359.3" fill="#d8d8f8"/><circle cx="1127" cy="340" r="2.200" fill="#1a3aa0"/><circle cx="1222" cy="364.500" r="2.200" fill="#1a3aa0"/><path d="M1115 345l23 7.500M1211 369.500l24 6.500" stroke="#283880" stroke-width="1.300" stroke-dasharray="1.500 .6"/><polyline points="1322.0,397.0 1329.0,392.5 1338.6,397.0 1327.0,396.0 1335.5,402.5 1325.0,399.5" fill="none" stroke="#000" stroke-width="0.9"/><polygon points="1324.5,394.5 1329.5,396.0 1325.5,399.0" fill="#e8e0a0"/><polyline points="1057.0,359.7 1064.5,351.0 1071.5,360.2" fill="none" stroke="#000" stroke-width="1.15"/><polyline points="1083.5,360.5 1087.0,352.0 1090.5,359.0" fill="none" stroke="#000" stroke-width="1.15"/><polyline points="1055.0,370.5 1062.0,381.5 1070.5,372.2" fill="none" stroke="#000" stroke-width="1.15"/><polyline points="1081.0,374.5 1084.5,384.5 1089.0,376.2" fill="none" stroke="#000" stroke-width="1.15"/><polyline points="1093.0,379.0 1095.0,386.5 1099.0,382.0" fill="none" stroke="#000" stroke-width="1.15"/><polyline points="1100.0,382.9 1101.5,399.5 1108.6,392.0" fill="none" stroke="#000" stroke-width="1.15"/><polyline points="1137.0,391.4 1144.0,398.5 1147.0,389.0" fill="none" stroke="#000" stroke-width="1.15"/><polyline points="1160.7,376.0 1170.0,380.5 1160.7,384.3" fill="none" stroke="#000" stroke-width="1.15"/><polyline points="1085.7,337.0 1087.0,348.0 1093.0,341.0" fill="none" stroke="#000" stroke-width="1.15"/><polyline points="1093.0,341.0 1098.0,351.0 1104.0,345.0" fill="none" stroke="#000" stroke-width="1.15"/><polyline points="1150.0,357.0 1156.0,368.0 1163.0,360.0" fill="none" stroke="#000" stroke-width="1.15"/><polygon points="1035.7,358.6 1088.6,360.7 1088.6,375.7 1035.7,369.3" fill="#0a2ca4"/><path d="M1055 359.300v12.300M1072 360v13.600" stroke="#0a1c70" stroke-width=".8"/><rect x="1080" y="360.400" width="3.500" height="14.500" fill="#3858c0"/><polygon points="1088.6,360.7 1098.0,355.0 1110.0,347.0 1142.9,352.9 1161.4,364.3 1160.7,384.3 1137.0,391.4 1108.6,392.0 1100.0,382.9 1088.6,375.7" fill="#000"/><polyline points="1222.6,518.0 1214.3,522.7 1222.6,526.9" fill="none" stroke="#000" stroke-width="1.15"/><polyline points="1237.5,509.0 1240.2,500.1 1242.9,509.0" fill="none" stroke="#000" stroke-width="1.15"/><polyline points="1246.4,525.7 1252.4,516.8 1258.9,525.7 1252.4,534.0 1246.4,525.7" fill="none" stroke="#000" stroke-width="1.15"/><polyline points="1258.9,525.7 1247.6,529.3" fill="none" stroke="#000" stroke-width="1.15"/><polyline points="1244.0,546.0 1252.4,534.0" fill="none" stroke="#000" stroke-width="1.15"/><polyline points="1245.2,537.6 1258.9,547.1" fill="none" stroke="#000" stroke-width="1.15"/><polyline points="1228.6,541.2 1224.4,549.5 1235.7,547.1" fill="none" stroke="#000" stroke-width="1.15"/><polyline points="1228.6,566.2 1224.4,557.9 1235.7,560.2" fill="none" stroke="#000" stroke-width="1.15"/><polyline points="1222.6,589.4 1214.3,584.6 1222.6,580.5" fill="none" stroke="#000" stroke-width="1.15"/><polyline points="1237.5,598.3 1240.2,607.3 1242.9,598.3" fill="none" stroke="#000" stroke-width="1.15"/><polyline points="1246.4,578.1 1254.8,579.3 1247.6,584.0" fill="none" stroke="#000" stroke-width="1.15"/><polyline points="1245.2,561.4 1251.2,568.6 1261.9,559.0" fill="none" stroke="#000" stroke-width="1.15"/><polyline points="1271.4,547.1 1274.0,538.2 1276.8,547.1" fill="none" stroke="#000" stroke-width="1.15"/><polyline points="1263.1,565.6 1274.0,560.2 1285.1,565.6 1263.1,565.6" fill="none" stroke="#000" stroke-width="1.15"/><polyline points="1261.9,560.2 1269.0,566.2" fill="none" stroke="#000" stroke-width="1.15"/><polyline points="1285.7,560.2 1278.6,566.2" fill="none" stroke="#000" stroke-width="1.15"/><polyline points="1288.1,547.1 1296.4,538.2 1304.8,547.1" fill="none" stroke="#000" stroke-width="1.15"/><polyline points="1288.1,560.2 1296.4,568.6 1304.8,560.2" fill="none" stroke="#000" stroke-width="1.15"/><polyline points="1310.7,547.1 1319.0,538.2 1327.4,547.1" fill="none" stroke="#000" stroke-width="1.15"/><polyline points="1310.7,560.2 1319.0,568.6 1327.4,560.2" fill="none" stroke="#000" stroke-width="1.15"/><polyline points="1338.1,547.1 1342.9,538.2 1347.6,547.1" fill="none" stroke="#000" stroke-width="1.15"/><polyline points="1338.1,560.2 1342.9,568.6 1347.6,560.2" fill="none" stroke="#000" stroke-width="1.15"/><polyline points="1365.5,547.1 1373.8,553.7 1365.5,560.2" fill="none" stroke="#000" stroke-width="1.15"/><polygon points="1222.6,522.1 1240.5,509.0 1246.4,528.1 1244.0,546.0 1228.6,541.2" fill="#1c1818"/><polygon points="1222.6,585.2 1240.5,598.3 1246.4,579.3 1244.0,561.4 1228.6,566.2" fill="#1c1818"/><polygon points="1238.1,547.1 1365.5,547.1 1365.5,560.2 1238.1,560.2" fill="#050505"/><polygon points="1271.4,560.2 1276.8,560.2 1276.2,568.6 1272.0,568.6" fill="#050505"/><polygon points="1247.6,525.7 1258.3,526.3 1258.3,529.9 1247.6,529.9" fill="#101010"/><path d="M1247.6 549.5h8M1248.6 552.5h9M1247.6 555.5h6" stroke="#d8d8d8" stroke-width="1.100"/><path d="M1290.5 549.5h8M1291.5 552.5h9M1290.5 555.5h6" stroke="#d8d8d8" stroke-width="1.100"/><path d="M1317.9 549.5h8M1318.9 552.5h9M1317.9 555.5h6" stroke="#d8d8d8" stroke-width="1.100"/><path d="M1348.8 549.5h8M1349.8 552.5h9M1348.8 555.5h6" stroke="#d8d8d8" stroke-width="1.100"/><polyline points="1223.8,524.5 1241.7,513.8" fill="none" stroke="#665" stroke-width="0.6" stroke-dasharray="1 1"/><polyline points="1223.8,582.9 1241.7,593.6" fill="none" stroke="#665" stroke-width="0.6" stroke-dasharray="1 1"/><rect x="1013.800" y="713.800" width="174.900" height="39.700" fill="#25466a" stroke="#182838" stroke-width="1"/><polygon points="1036.0,729.8 1070.0,718.9 1113.4,722.0 1144.3,731.3 1188.0,733.0 1188.0,752.5 1104.1,751.4 1056.1,749.9" fill="#0a2ca4"/><polygon points="1025.1,736.0 1041.4,725.9 1056.1,746.8 1025.1,750.7" fill="#080808"/><polygon points="1014.6,714.6 1036.0,714.6 1036.0,729.0 1025.1,736.0 1025.1,749.9 1014.6,746.8" fill="#f0f4f8"/><polygon points="1063.0,739.8 1085.5,734.4 1101.0,735.2 1104.1,747.6 1066.9,746.8" fill="#f4d020"/><polygon points="1063.0,739.8 1070.0,738.0 1072.3,746.5 1066.9,746.8" fill="#f4f4f4"/><circle cx="1087.8" cy="738.3" r="2.800" fill="#203890"/><path d="M1077.8 743.7h20" stroke="#203890" stroke-width="1.400"/><rect x="1015.5" y="724.0" width="11" height="2.600" fill="#d02020"/><rect x="1019.2" y="715.5" width="4" height="5" fill="#9020a0"/><path d="M1015.2 736.7v10" stroke="#333" stroke-width="9" stroke-dasharray="1 1" transform="translate(5 0)"/><path d="M1025.1 749.6h100" stroke="#080808" stroke-width="1.500"/><path d="M1079.3 716.6h18" stroke="#e8f0ff" stroke-width="1.600" stroke-dasharray="2 1"/><path d="M1136.6 743.7l18 6M1144.3 728.2l22 5M1082.4 723.6l14 -4" stroke="#a8b8d8" stroke-width="1" stroke-dasharray="1 1.500"/><polyline points="1196.9,720.6 1199.8,735.4 1215.5,732.4" fill="none" stroke="#000" stroke-width="1.15"/><polyline points="1223.4,721.6 1231.3,714.7 1237.2,727.5" fill="none" stroke="#000" stroke-width="1.15"/><polyline points="1250.9,732.4 1252.9,725.5 1263.7,725.5 1265.6,735.4" fill="none" stroke="#000" stroke-width="1.15"/><polyline points="1227.3,738.3 1230.3,748.1 1241.1,744.2" fill="none" stroke="#000" stroke-width="1.15"/><polyline points="1288.2,731.4 1295.1,719.6 1307.9,727.5" fill="none" stroke="#000" stroke-width="1.15"/><polyline points="1317.7,722.6 1327.5,713.8 1345.2,722.6" fill="none" stroke="#000" stroke-width="1.15"/><polyline points="1276.4,754.0 1287.2,758.9 1300.0,756.0 1303.9,744.2" fill="none" stroke="#000" stroke-width="1.15"/><polyline points="1313.8,737.3 1321.6,742.2 1327.5,732.4" fill="none" stroke="#000" stroke-width="1.15"/><polygon points="1196.9,720.6 1216.5,722.6 1268.6,737.3 1274.5,753.0 1262.7,755.0 1215.5,732.4" fill="#0a2ca4"/><polygon points="1345.2,722.6 1325.6,723.6 1270.6,737.3 1268.6,749.1 1276.4,754.0 1325.6,733.4" fill="#0a2ca4"/><polygon points="1196.9,720.6 1216.5,722.6 1215.5,732.4" fill="#080808"/><polygon points="1345.2,722.6 1327.5,723.6 1327.5,732.4" fill="#080808"/><polygon points="1265.6,742.2 1270.6,738.3 1272.5,748.1 1267.6,748.1" fill="#080808"/><path d="M1252.9 731.4l12 6M1277.4 736.3l12 -4" stroke="#d0d8ff" stroke-width="1.200" stroke-dasharray="1.200 1"/><polygon points="1135.0,769.2 1151.3,762.3 1154.8,777.0 1149.7,781.6 1159.8,799.4 1167.5,800.2 1176.0,811.8 1159.8,820.3 1153.6,807.2 1146.6,791.7" fill="#101418" stroke="#000" stroke-width="0.8"/><polygon points="1140.0,776.0 1146.0,772.0 1163.0,806.0 1157.0,809.0" fill="#c8d0d8"/><polygon points="1137.0,770.5 1150.5,764.5 1151.5,768.0 1138.0,773.5" fill="#f0f0f0"/><polygon points="1158.5,816.0 1173.0,808.5 1174.5,811.5 1160.0,819.0" fill="#f0f0f0"/><polyline points="1022.0,880.8 1014.3,887.8 1022.8,893.2 1022.0,880.8" fill="none" stroke="#000" stroke-width="1.1"/><polyline points="1022.0,911.7 1014.3,905.6 1022.8,899.4 1022.0,911.7" fill="none" stroke="#000" stroke-width="1.1"/><polyline points="1038.3,880.8 1042.2,890.9 1038.3,893.2 1038.3,880.8" fill="none" stroke="#000" stroke-width="1.1"/><polyline points="1038.3,911.7 1042.2,901.7 1038.3,899.4 1038.3,911.7" fill="none" stroke="#000" stroke-width="1.1"/><polyline points="1045.2,893.2 1053.8,884.7 1062.3,893.2 1045.2,893.2" fill="none" stroke="#000" stroke-width="1.1"/><polyline points="1045.2,899.4 1053.8,907.9 1062.3,899.4 1045.2,899.4" fill="none" stroke="#000" stroke-width="1.1"/><polyline points="1076.2,893.2 1083.9,896.3 1076.2,899.4 1076.2,893.2" fill="none" stroke="#000" stroke-width="1.1"/><polygon points="1022.8,893.2 1076.2,893.2 1076.2,899.4 1022.8,899.4" fill="#c4c4c4" stroke="#000" stroke-width="0.6"/><polygon points="1045.2,893.2 1062.3,893.2 1062.3,899.4 1045.2,899.4" fill="#080808"/><polygon points="1022.0,880.8 1038.3,880.8 1038.3,911.7 1022.0,911.7" fill="#101010"/><polygon points="1028.2,883.1 1036.0,881.6 1029.8,892.4" fill="#b0b0b0"/><polygon points="1028.2,909.4 1036.0,911.0 1029.8,900.1" fill="#b0b0b0"/><polyline points="1100.2,880.8 1092.5,885.4 1100.2,893.2 1100.2,880.8" fill="none" stroke="#000" stroke-width="1.1"/><polyline points="1100.2,911.7 1092.5,907.1 1100.2,899.4 1100.2,911.7" fill="none" stroke="#000" stroke-width="1.1"/><polyline points="1116.5,880.8 1120.3,882.3 1118.0,893.2 1116.5,880.8" fill="none" stroke="#000" stroke-width="1.1"/><polyline points="1116.5,911.7 1120.3,910.2 1118.0,899.4 1116.5,911.7" fill="none" stroke="#000" stroke-width="1.1"/><polyline points="1131.9,893.2 1135.0,884.7 1138.1,893.2 1131.9,893.2" fill="none" stroke="#000" stroke-width="1.1"/><polyline points="1131.9,899.4 1135.0,907.9 1138.1,899.4 1131.9,899.4" fill="none" stroke="#000" stroke-width="1.1"/><polyline points="1152.1,893.2 1159.8,896.3 1152.1,899.4 1152.1,893.2" fill="none" stroke="#000" stroke-width="1.1"/><polygon points="1116.5,893.2 1152.1,893.2 1152.1,899.4 1116.5,899.4" fill="#c4c4c4" stroke="#000" stroke-width="0.6"/><polygon points="1131.2,893.2 1138.9,893.2 1138.9,899.4 1131.2,899.4" fill="#080808"/><path d="M1100.2 880.8h6a10.300 15.500 0 0 1 0 31h-6z" fill="#101010"/><polygon points="1104.1,884.7 1109.5,887.8 1109.5,904.8 1104.1,907.9" fill="#404040"/><circle cx="1181.5" cy="892.7" r="12.4" fill="#000"/><circle cx="1181.5" cy="892.7" r="10.2" fill="none" stroke="#f0e448" stroke-width="0.9" stroke-dasharray="3.5 1.2"/><circle cx="1181.5" cy="892.7" r="7.4" fill="#b0b4b8"/><circle cx="1181.5" cy="892.7" r="4.5" fill="none" stroke="#70747c" stroke-width="1.5" stroke-dasharray="1.5 1.5"/><circle cx="1181.5" cy="892.7" r="2.0" fill="#e8e8ec"/><circle cx="1214.4" cy="892.7" r="12.4" fill="#000"/><circle cx="1214.4" cy="892.7" r="10.2" fill="none" stroke="#f0e448" stroke-width="0.9" stroke-dasharray="3.5 1.2"/><circle cx="1214.4" cy="892.7" r="7.4" fill="#b0b4b8"/><circle cx="1214.4" cy="892.7" r="4.5" fill="none" stroke="#70747c" stroke-width="1.5" stroke-dasharray="1.5 1.5"/><circle cx="1214.4" cy="892.7" r="2.0" fill="#e8e8ec"/><circle cx="1247.7" cy="892.7" r="12.4" fill="#000"/><circle cx="1247.7" cy="892.7" r="10.2" fill="none" stroke="#f0e448" stroke-width="0.9" stroke-dasharray="3.5 1.2"/><circle cx="1247.7" cy="892.7" r="7.4" fill="#b0b4b8"/><circle cx="1247.7" cy="892.7" r="4.5" fill="none" stroke="#70747c" stroke-width="1.5" stroke-dasharray="1.5 1.5"/><circle cx="1247.7" cy="892.7" r="2.0" fill="#e8e8ec"/><circle cx="1487.2" cy="725.5" r="12.4" fill="#000"/><circle cx="1487.2" cy="725.5" r="10.2" fill="none" stroke="#f0e448" stroke-width="0.9" stroke-dasharray="3.5 1.2"/><circle cx="1487.2" cy="725.5" r="7.4" fill="#b0b4b8"/><circle cx="1487.2" cy="725.5" r="4.5" fill="none" stroke="#70747c" stroke-width="1.5" stroke-dasharray="1.5 1.5"/><circle cx="1487.2" cy="725.5" r="2.0" fill="#e8e8ec"/><rect x="1268.200" y="883.500" width="32.100" height="16.100" rx="1" fill="#000"/><rect x="1269.800" y="884.600" width="29.400" height="3.700" fill="#f4f4f4"/><text x="1270.500" y="887.800" font-family="Liberation Sans,sans-serif" font-weight="bold" font-size="3.600" fill="#000">Sauber F1 Team</text><path d="M1308 880.300h19.300v13.700h-9.600v-6.500h-9.700z" fill="#000"/><rect x="1321.500" y="888.500" width="4" height="4" fill="#c8c8d0"/><path d="M1335.400 880.300h19.300v7.200h-9.700v6.500h-9.600z" fill="#000"/><rect x="1337" y="888.500" width="4" height="4" fill="#c8c8d0"/><polygon points="1362.4,880.8 1379.6,880.3 1380.0,894.7 1362.4,894.0" fill="#0a2ca4" stroke="#0a1850" stroke-width="0.8"/><polygon points="1388.1,880.3 1411.8,884.3 1388.1,888.3" fill="#182848"/><rect x="1420.300" y="880.300" width="19.300" height="7.200" rx="1.500" fill="#0a2ca4" stroke="#0a1850" stroke-width=".8"/><rect x="1447.500" y="880.300" width="19.400" height="7.200" rx="1.500" fill="#0a2ca4" stroke="#0a1850" stroke-width=".8"/></svg>
<div class="a" style="left:48px;top:1010px;width:344px;height:40px;background:#353535"></div><div class="t" style="left:57.0px;top:1023.0px;font-size:15px;color:#a8a8a8;letter-spacing:-0.133px;">Search the web and Windows</div>
<svg class="a" style="left:16px;top:1022px" width="16" height="16" viewBox="0 0 16 16"><path d="M0 2.300l6.500-.9v6.100H0z M7.500 1.300L16 0v7.500H7.500z M0 8.500h6.500v6.100L0 13.700z M7.500 8.500H16V16l-8.500-1.300z" fill="#fff"/></svg>
<div class="a" style="left:397px;top:1022px;width:1px;height:16px;background:#55595c"></div><div class="a" style="left:400px;top:1022px;width:1px;height:16px;background:#55595c"></div><div class="a" style="left:791px;top:1022px;width:1px;height:16px;background:#55595c"></div><div class="a" style="left:794px;top:1022px;width:1px;height:16px;background:#55595c"></div><div class="a" style="left:849px;top:1022px;width:1px;height:16px;background:#55595c"></div><div class="a" style="left:852px;top:1022px;width:1px;height:16px;background:#55595c"></div><div class="a" style="left:731px;top:1010px;width:44px;height:40px;background:#2c3438"></div><div class="a" style="left:464px;top:1048px;width:37px;height:2px;background:#7af0a8"></div><div class="a" style="left:510px;top:1048px;width:36px;height:2px;background:#7af0a8"></div><div class="a" style="left:555px;top:1048px;width:36px;height:2px;background:#7af0a8"></div><div class="a" style="left:600px;top:1048px;width:36px;height:2px;background:#7af0a8"></div><div class="a" style="left:645px;top:1048px;width:36px;height:2px;background:#7af0a8"></div><div class="a" style="left:690px;top:1048px;width:36px;height:2px;background:#7af0a8"></div><div class="a" style="left:731px;top:1048px;width:44px;height:2px;background:#7af0a8"></div><svg class="a" style="left:424px;top:1017.5px" width="24" height="24" viewBox="0 0 24 24"><rect x="0" y="0" width="24" height="24" fill="#f4f0f0"/><path d="M0 16l24-6v14H0z" fill="#e8c8c8"/><path d="M12 3l8 17h-4.500l-3.500-8-3.500 8H4z" fill="#c01818"/><path d="M7 17h10v2H7z" fill="#a01010"/></svg>
<svg class="a" style="left:469px;top:1017.5px" width="24" height="24" viewBox="0 0 24 24"><path d="M1 4h8l2 2h12v15H1z" fill="#f0c850"/><path d="M1 8h22v13H1z" fill="#fadc78"/><path d="M6 13h12v8H6z" fill="#3c9ce8"/><path d="M9 16h6v5H9z" fill="#fadc78"/></svg>
<svg class="a" style="left:515.5px;top:1017.5px" width="24" height="24" viewBox="0 0 24 24"><circle cx="12" cy="12" r="11.500" fill="#8468c8"/><circle cx="12" cy="12" r="10.500" fill="#a890e0" opacity=".6"/><g fill="none" stroke="#fff" stroke-width="1.800"><path d="M17 5.500a8 8 0 1 0 0 13"/><path d="M17 9a4.500 4.500 0 1 0 0 6.500" /><path d="M18 12.300a1.500 1.500 0 1 0 0 .1"/></g></svg>
<svg class="a" style="left:560.5px;top:1017.5px" width="24" height="24" viewBox="0 0 24 24"><rect x="1" y="2" width="17" height="14" fill="#c8d8e8" stroke="#506070" stroke-width="1"/><rect x="3" y="4" width="13" height="10" fill="#3868b0"/><path d="M6 17h8l1 4H5z" fill="#b8b8b8"/><path d="M5 22C7 12 14 5 22 1c-1 8-6 16-15 20z" fill="#68c020"/><path d="M6 21C10 14 15 8 21 3" stroke="#2a7010" stroke-width="1" fill="none"/></svg>
<svg class="a" style="left:605.5px;top:1017.5px" width="24" height="24" viewBox="0 0 24 24"><path d="M4 1h16v20c-3 2-5-1-8 0s-5 2-8 0z" fill="#eef2f8" stroke="#a8b8d0" stroke-width=".8"/><rect x="4" y="1" width="16" height="4" fill="#4878c0"/><path d="M7 15l3-8h1.500l3 8h-1.600l-.7-2H9.300l-.7 2z" fill="#e07820"/><path d="M15 9h4M15 12h4" stroke="#6088c8" stroke-width="1.200"/><path d="M3 20c3 3 6 0 9 0s6 2 9 0v3H3z" fill="#b0c8e8"/></svg>
<svg class="a" style="left:650.5px;top:1017.5px" width="24" height="24" viewBox="0 0 24 24"><circle cx="12" cy="12" r="11.500" fill="#e03c30"/><path d="M12 12L2.100 6.200A11.500 11.500 0 0 0 10 23.300z" fill="#28a048"/><path d="M12 12l-2 11.300A11.500 11.500 0 0 0 22.500 7.500z" fill="#f8c818"/><path d="M12 12L22.500 7.500A11.500 11.500 0 0 0 2.100 6.200z" fill="#e03c30"/><circle cx="12" cy="12" r="5.300" fill="#fff"/><circle cx="12" cy="12" r="4.200" fill="#4888f0"/></svg>
<svg class="a" style="left:695.5px;top:1017.5px" width="24" height="24" viewBox="0 0 24 24"><circle cx="9" cy="8" r="7.500" fill="#18a8e8"/><circle cx="14" cy="15" r="7.500" fill="#18a8e8"/><circle cx="11.500" cy="11.500" r="8.500" fill="#18a8e8"/><text x="6.500" y="17.500" font-family="Liberation Sans,sans-serif" font-weight="bold" font-size="16" fill="#fff">S</text><circle cx="19" cy="19" r="4.500" fill="#fff" stroke="#90c040" stroke-width="1.400"/></svg>
<svg class="a" style="left:740.5px;top:1017.5px" width="24" height="24" viewBox="0 0 24 24"><path d="M11 1c-5 2-9 7-8 13l7 8c-2-5-1-9 2-12z" fill="#1878d0"/><path d="M3 14l7 8 1-7z" fill="#b8d8f0"/><path d="M11 1c2 3 2 6 1 9l6 4c2-5-1-11-7-13z" fill="#2c90e8"/><path d="M12 10l6 4-3 7-4-6z" fill="#0c58a8"/><path d="M15 13l5 9M20 13l-5 9" stroke="#d8d8d8" stroke-width="1.300"/><circle cx="15" cy="22" r="1.600" fill="none" stroke="#e0a020" stroke-width="1.200"/><circle cx="20.500" cy="22" r="1.600" fill="none" stroke="#e0a020" stroke-width="1.200"/></svg>
<div class="t" style="left:804.0px;top:1024.0px;font-size:12px;color:#fff;letter-spacing:-0.403px;">Links</div>
<div class="t" style="left:857.5px;top:1024.0px;font-size:12px;color:#fff;letter-spacing:-0.360px;">Address</div>
<div class="a" style="left:905px;top:1020px;width:271px;height:21px;background:#fff"></div><div class="a" style="left:1157px;top:1021px;width:1px;height:19px;background:#d0d0d0"></div><svg class="a" style="left:1140px;top:1024px" width="14" height="12" viewBox="0 0 14 12"><path d="M3 4l4 4 4-4" fill="none" stroke="#444" stroke-width="1.200"/></svg>
<svg class="a" style="left:1159px;top:1022px" width="16" height="16" viewBox="0 0 16 16"><path d="M11.500 4.500a4.500 4.500 0 1 0 1.200 3.800" fill="none" stroke="#888" stroke-width="1.400"/><path d="M9 4.800h3.500V1.500" fill="none" stroke="#888" stroke-width="1.400"/></svg>
<svg class="a" style="left:1182px;top:1021px" width="16" height="16" viewBox="0 0 16 16"><path d="M3 10.500l5-5 5 5" fill="none" stroke="#fff" stroke-width="1.400"/></svg>
<svg class="a" style="left:1206px;top:1021px" width="16" height="16" viewBox="0 0 16 16"><circle cx="8" cy="8" r="7.500" fill="#8870c8"/><g fill="none" stroke="#fff" stroke-width="1.300"><path d="M11.500 3.500a5.500 5.500 0 1 0 0 9"/><path d="M11.500 6a3 3 0 1 0 0 4.500"/></g></svg>
<svg class="a" style="left:1230px;top:1021px" width="16" height="16" viewBox="0 0 16 16"><rect x=".5" y=".5" width="15" height="15" fill="#2a0c08" stroke="#d02818" stroke-width="1.200"/><path d="M3 13c3-2 5-7 5-10 0 4 3 7 6 7-4 0-8 1-11 3z" fill="none" stroke="#f0e8e8" stroke-width="1.100"/></svg>
<svg class="a" style="left:1254px;top:1021px" width="16" height="16" viewBox="0 0 16 16"><rect width="16" height="16" rx="2" fill="#e87818"/><path d="M8 2c-2 2 2 3 0 6M4.500 10.500h7M4 12.500h8" stroke="#fff" stroke-width="1.300" fill="none"/></svg>
<svg class="a" style="left:1278px;top:1021px" width="16" height="16" viewBox="0 0 16 16"><rect y="1.500" width="16" height="13" fill="#2c3c18"/><path d="M2 8c2-3 6-4 9-2-2 0-4 1-5 2 1 1.500 3 2 5 1.500-3 2.500-7 1.500-9-1.500z" fill="#78b818"/><rect x="10" y="4" width="5" height="8" fill="#68a810"/></svg>
<svg class="a" style="left:1303px;top:1021px" width="16" height="16" viewBox="0 0 16 16"><path d="M1 14L7 1h3l-4.500 13z" fill="#18a8a0"/><path d="M7 1h3l5 13h-3.500z" fill="#e0b020"/><path d="M4 14h11l-1.200-3H5.500z" fill="#1860a8"/><circle cx="12" cy="4.500" r="3.300" fill="#e86818"/><path d="M10.500 4.500a1.500 1.500 0 1 0 1.500-1.500" stroke="#fff" stroke-width="1" fill="none"/></svg>
<svg class="a" style="left:1326px;top:1021px" width="16" height="16" viewBox="0 0 16 16"><path d="M3.500 13a3 3 0 0 1 0-6 4 4 0 0 1 7.500-1.200 3.600 3.600 0 0 1 1.500 7.200z" fill="#909498"/><path d="M2 13.500a2.500 2.500 0 0 1 .5-4.500" stroke="#c8ccd0" stroke-width="1" fill="none"/></svg>
<svg class="a" style="left:1350px;top:1021px" width="16" height="16" viewBox="0 0 16 16"><ellipse cx="8" cy="8" rx="7.500" ry="5.500" fill="#7c8890"/><ellipse cx="8" cy="7" rx="6" ry="3.300" fill="#c8d4dc"/><ellipse cx="9" cy="8.500" rx="3.500" ry="2" fill="#4c5860"/></svg>
<svg class="a" style="left:1373px;top:1021px" width="16" height="16" viewBox="0 0 16 16"><path d="M1.500 6h3L10 1.500v13L4.500 10h-3z" fill="#e88060"/><path d="M4.500 6L10 1.500v13L4.500 10z" fill="#f0a080"/><path d="M12 4a6 6 0 0 1 0 8" stroke="#803820" stroke-width="1.200" fill="none"/></svg>
<svg class="a" style="left:1398px;top:1021px" width="16" height="16" viewBox="0 0 16 16"><rect x="4" y="3.500" width="7" height="11.500" rx="1" fill="none" stroke="#fff" stroke-width="1.200"/><rect x="5.500" y=".8" width="4" height="3" fill="none" stroke="#fff" stroke-width="1"/><path d="M10 12l2 2 3.500-4" stroke="#fff" stroke-width="1.200" fill="none"/></svg>
<svg class="a" style="left:1421px;top:1021px" width="16" height="16" viewBox="0 0 16 16"><circle cx="8" cy="5" r="4.500" fill="#d8d8e0"/><path d="M4 9c0-2 1-4 2-4s1 1 1 2c.5-1 1.500-1 2 0 .5-1 1.500-.8 1.800.2.600-.6 1.400 0 1.200 1.300L11 15.500H6z" fill="#f0b888" stroke="#a06838" stroke-width=".6"/></svg>
<svg class="a" style="left:1445.5px;top:1021px" width="16" height="16" viewBox="0 0 16 16"><circle cx="8" cy="8" r="7.500" fill="#f0c820"/><circle cx="8" cy="8" r="3" fill="#fff8e0"/><circle cx="8" cy="8" r="1.300" fill="#605020"/><path d="M2 11a7 7 0 0 0 12 0z" fill="#d8d8d8"/></svg>
<svg class="a" style="left:1470px;top:1021px" width="16" height="16" viewBox="0 0 16 16"><circle cx="8" cy="8" r="7.500" fill="#e8b020"/><circle cx="8" cy="8" r="6" fill="none" stroke="#a87008" stroke-width="1"/><path d="M5 5h6v4.500c0 1.500-1.500 2.500-3 3-1.500-.5-3-1.500-3-3z" fill="#f8e088" stroke="#906000" stroke-width=".8"/></svg>
<svg class="a" style="left:1494px;top:1021px" width="16" height="16" viewBox="0 0 16 16"><rect x="4.500" y="3" width="10.500" height="8" fill="none" stroke="#fff" stroke-width="1.200"/><path d="M9.800 11v3M6.500 14.500h6.500" stroke="#fff" stroke-width="1.200"/><rect x=".8" y="1" width="4.500" height="5" fill="#020a0f" stroke="#fff" stroke-width="1.100"/><path d="M3 6v7h3" stroke="#fff" stroke-width="1" fill="none"/></svg>
<svg class="a" style="left:1517px;top:1021px" width="16" height="16" viewBox="0 0 16 16"><path d="M1 6h2.500L7.500 2.500v11L3.500 10H1z" fill="none" stroke="#fff" stroke-width="1.100"/><circle cx="12" cy="11.500" r="3.800" fill="#e02828"/><path d="M10.300 9.800l3.400 3.400M13.700 9.800l-3.400 3.400" stroke="#fff" stroke-width="1.100"/></svg>
<svg class="a" style="left:1541px;top:1020px" width="18" height="18" viewBox="0 0 18 18"><path d="M1.500 1.500h15v11.500H11l-2.500 3.500v-3.500H1.500z" fill="#fff"/><path d="M4 5h10M4 7.500h10M4 10h7" stroke="#020a0f" stroke-width="1.100"/></svg>
<div class="t" style="left:1568.5px;top:1023.0px;font-size:12px;color:#fff;letter-spacing:-1.335px;">ENG</div>
<div class="t" style="left:1609.5px;top:1014.5px;font-size:12.5px;color:#fff;letter-spacing:0.062px;">上午 12:14</div>
<div class="t" style="left:1609.5px;top:1031.5px;font-size:12.5px;color:#fff;letter-spacing:-0.179px;">2016/3/27</div>
</body></html>
